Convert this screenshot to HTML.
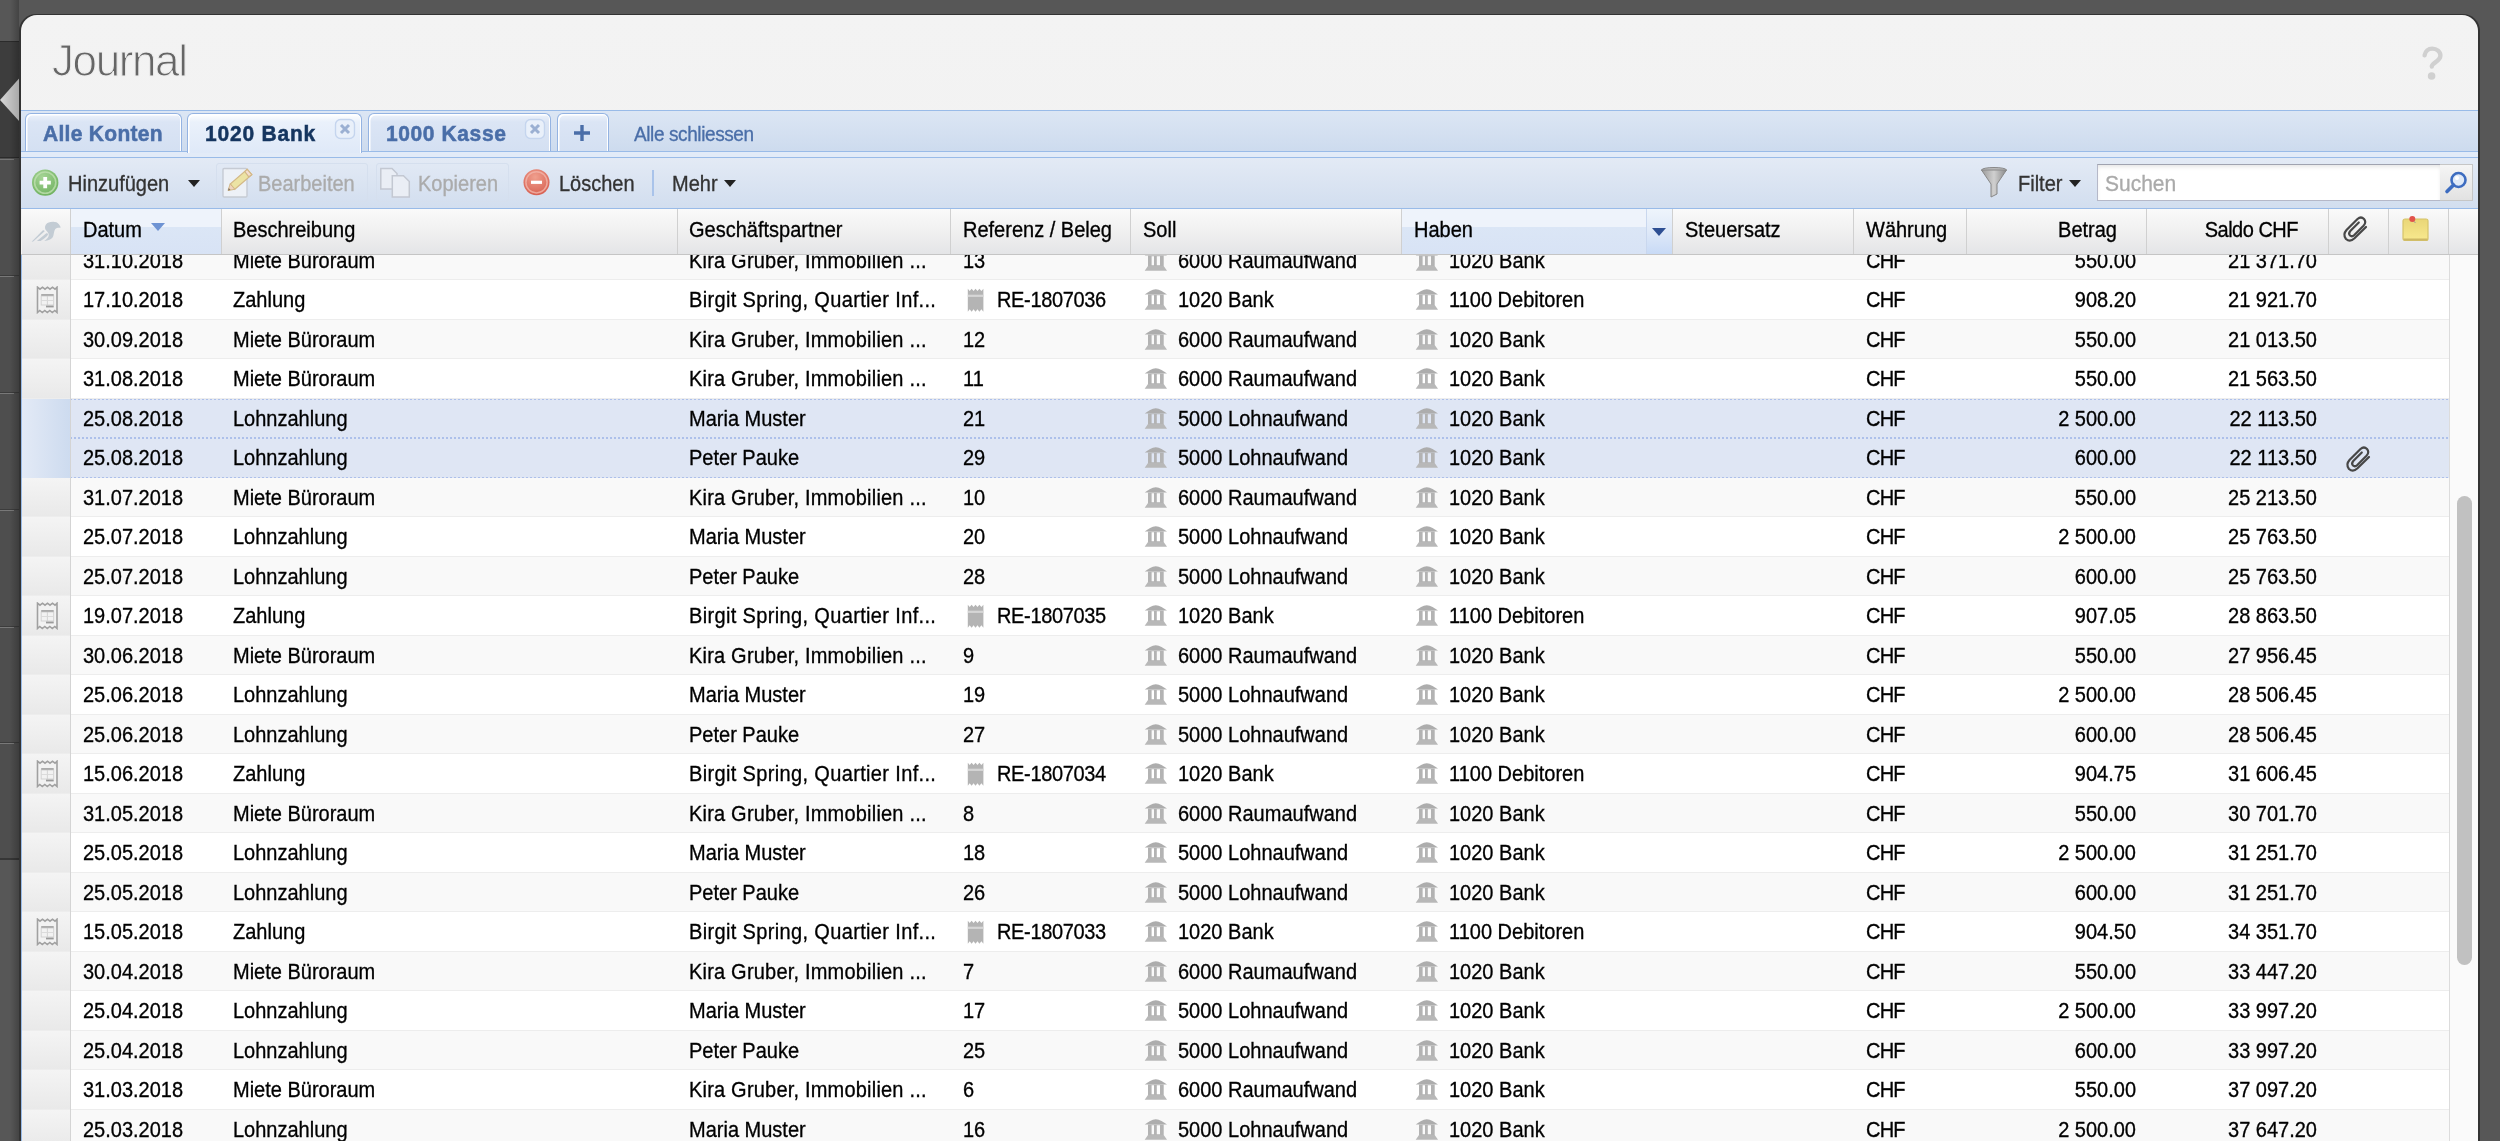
<!DOCTYPE html><html><head><meta charset="utf-8"><style>
*{margin:0;padding:0;box-sizing:border-box}
html,body{width:2500px;height:1141px;overflow:hidden;background:#575757;font-family:"Liberation Sans",sans-serif}
.a{position:absolute}
.t{position:absolute;white-space:nowrap;-webkit-text-stroke:0.3px currentColor}
</style></head><body>
<svg width="0" height="0" style="position:absolute"><defs><filter id="bl" x="-20%" y="-20%" width="140%" height="140%"><feGaussianBlur stdDeviation="0.45"/></filter></defs></svg>
<div class="a" style="left:0;top:0;width:21px;height:1141px;background:#4e4e4e"></div>
<div class="a" style="left:0;top:0;width:21px;height:41px;background:#575757"></div>
<div class="a" style="left:0;top:41px;width:20px;height:1px;background:#2b2b2b"></div>
<div class="a" style="left:0;top:42px;width:20px;height:115px;background:#3d3d3d"></div>
<div class="a" style="left:0;top:157px;width:20px;height:1px;background:#2b2b2b"></div>
<div class="a" style="left:0;top:159px;width:14px;height:1px;background:#767676"></div>
<div class="a" style="left:0;top:860px;width:21px;height:281px;background:#575757"></div>
<div class="a" style="left:0;top:858px;width:20px;height:2px;background:#363636"></div>
<div class="a" style="left:0;top:275px;width:20px;height:1px;background:#3c3c3c"></div>
<div class="a" style="left:0;top:276px;width:14px;height:1px;background:#787878"></div>
<div class="a" style="left:0;top:392px;width:20px;height:1px;background:#3c3c3c"></div>
<div class="a" style="left:0;top:393px;width:14px;height:1px;background:#787878"></div>
<div class="a" style="left:0;top:509px;width:20px;height:1px;background:#3c3c3c"></div>
<div class="a" style="left:0;top:510px;width:14px;height:1px;background:#787878"></div>
<div class="a" style="left:0;top:626px;width:20px;height:1px;background:#3c3c3c"></div>
<div class="a" style="left:0;top:627px;width:14px;height:1px;background:#787878"></div>
<div class="a" style="left:0;top:742px;width:20px;height:1px;background:#3c3c3c"></div>
<div class="a" style="left:0;top:743px;width:14px;height:1px;background:#787878"></div>
<div class="a" style="left:10px;top:0;width:9px;height:1141px;background:linear-gradient(90deg,rgba(0,0,0,0),rgba(0,0,0,0.22))"></div>
<svg class="a" style="left:0;top:76px" width="20" height="48" viewBox="0 0 20 48"><defs><linearGradient id="tg" x1="0" y1="0" x2="1" y2="0"><stop offset="0" stop-color="#d8d8d8"/><stop offset="1" stop-color="#a8a8a8"/></linearGradient></defs><path d="M19.5 2 L19.5 45.5 L0 24 Z" fill="url(#tg)"/></svg>
<div class="a" style="left:19px;top:14px;width:2461px;height:1200px;border-radius:17px 17px 0 0;background:#333"></div>
<div class="a" style="left:21px;top:15px;width:2457px;height:1200px;border-radius:16px 16px 0 0;background:linear-gradient(#f3f3f3,#ebebeb)"></div>
<div class="t" style="left:52px;top:38.95px;font-size:44px;line-height:44px;color:#666;font-weight:normal;transform:scaleY(1.01);transform-origin:0 37.25px;letter-spacing:-1.4px;-webkit-text-stroke:1.1px #efefef">Journal</div>
<svg class="a" style="left:2400px;top:30px" width="70" height="70" viewBox="0 0 70 70"><path d="M24.6 25.2 C25.2 21 28.5 18.6 32.2 18.6 C36.8 18.6 40.4 21.6 40.4 25.6 C40.4 29.2 37.6 30.8 35 32.6 C33 34 31.8 35.2 31.8 36.6" fill="none" stroke="#d0d0d0" stroke-width="4.4" stroke-linecap="round"/><circle cx="31.6" cy="46" r="3.8" fill="#d0d0d0"/></svg>
<div class="a" style="left:21px;top:110px;width:2457px;height:1px;background:#99bbe8"></div>
<div class="a" style="left:21px;top:111px;width:2457px;height:40px;background:linear-gradient(#dce6f4,#cddbee)"></div>
<div class="a" style="left:21px;top:151px;width:2457px;height:1px;background:#99bbe8"></div>
<div class="a" style="left:21px;top:152px;width:2457px;height:5px;background:#e2ebf8"></div>
<div class="a" style="left:21px;top:157px;width:2457px;height:1px;background:#99bbe8"></div>
<div class="a" style="left:25px;top:113px;width:157px;height:38px;border:1.6px solid #94b3e2;border-bottom:none;border-radius:6px 6px 0 0;background:linear-gradient(#eef3fb 0px,#dbe5f5 8px,#d4e0f2);box-shadow:inset 1.5px 1.5px 0 #fff,inset -1px 0 0 #fff"></div>
<div class="a" style="left:187px;top:113px;width:175px;height:40px;border:1.6px solid #94b3e2;border-bottom:none;border-radius:6px 6px 0 0;background:linear-gradient(#ffffff 0px,#eaf1fb 8px,#dfe9f8);box-shadow:inset 1.5px 1.5px 0 #fff,inset -1px 0 0 #fff"></div>
<div class="a" style="left:368px;top:113px;width:183px;height:38px;border:1.6px solid #94b3e2;border-bottom:none;border-radius:6px 6px 0 0;background:linear-gradient(#eef3fb 0px,#dbe5f5 8px,#d4e0f2);box-shadow:inset 1.5px 1.5px 0 #fff,inset -1px 0 0 #fff"></div>
<div class="a" style="left:557px;top:113px;width:52px;height:38px;border:1.6px solid #94b3e2;border-bottom:none;border-radius:6px 6px 0 0;background:linear-gradient(#eef3fb 0px,#dbe5f5 8px,#d4e0f2);box-shadow:inset 1.5px 1.5px 0 #fff,inset -1px 0 0 #fff"></div>
<div class="t" style="left:43px;top:123.22px;font-size:21px;line-height:21px;color:#4a6ea8;font-weight:bold;transform:scaleY(1.07);transform-origin:0 17.78px;letter-spacing:0.3px;-webkit-text-stroke:0.5px currentColor">Alle Konten</div>
<div class="t" style="left:205px;top:123.22px;font-size:21px;line-height:21px;color:#15355f;font-weight:bold;transform:scaleY(1.07);transform-origin:0 17.78px;letter-spacing:0.8px;-webkit-text-stroke:0.5px currentColor">1020 Bank</div>
<div class="t" style="left:386px;top:123.22px;font-size:21px;line-height:21px;color:#4a6ea8;font-weight:bold;transform:scaleY(1.07);transform-origin:0 17.78px;letter-spacing:0.6px;-webkit-text-stroke:0.5px currentColor">1000 Kasse</div>
<svg class="a" style="left:572px;top:123px" width="20" height="20" viewBox="0 0 20 20"><path d="M10 2 V18 M2 10 H18" stroke="#4a6ea8" stroke-width="3.4"/></svg>
<div class="t" style="left:634px;top:124.92px;font-size:19px;line-height:19px;color:#4a6ea8;font-weight:normal;transform:scaleY(1.07);transform-origin:0 16.08px;letter-spacing:-0.4px">Alle schliessen</div>
<svg class="a" style="left:334px;top:118px" width="22" height="22" viewBox="0 0 22 22"><g filter="url(#bl)"><rect x="1.5" y="1.5" width="19" height="19" rx="5" fill="#e9f0fa" stroke="#c5d5ee" stroke-width="1.4"/><path d="M7 7 L15 15 M15 7 L7 15" stroke="#9bb0d2" stroke-width="3"/></g></svg>
<svg class="a" style="left:524px;top:118px" width="22" height="22" viewBox="0 0 22 22"><g filter="url(#bl)"><rect x="1.5" y="1.5" width="19" height="19" rx="5" fill="#e9f0fa" stroke="#c5d5ee" stroke-width="1.4"/><path d="M7 7 L15 15 M15 7 L7 15" stroke="#9bb0d2" stroke-width="3"/></g></svg>
<div class="a" style="left:21px;top:158px;width:2457px;height:50px;background:linear-gradient(#e3eaf5,#d2deef)"></div>
<div class="a" style="left:21px;top:208px;width:2457px;height:1px;background:#99bbe8"></div>
<svg class="a" style="left:30px;top:168px" width="30" height="30" viewBox="0 0 30 30"><defs><radialGradient id="gg" cx="0.4" cy="0.3" r="0.8"><stop offset="0" stop-color="#a6d596"/><stop offset="1" stop-color="#6aae5a"/></radialGradient></defs><g filter="url(#bl)"><circle cx="15.2" cy="14.6" r="13.2" fill="url(#gg)"/><circle cx="15.2" cy="14.6" r="10.6" fill="none" stroke="#bfe0b0" stroke-width="1.6" opacity="0.8"/><path d="M15.2 9 V20.2 M9.6 14.6 H20.8" stroke="#fff" stroke-width="3.8"/></g></svg>
<div class="t" style="left:68px;top:174.07px;font-size:20px;line-height:20px;color:#333;font-weight:normal;transform:scaleY(1.07);transform-origin:0 16.93px;">Hinzufügen</div>
<svg class="a" style="left:188px;top:180px" width="12" height="7" viewBox="0 0 12 7"><path d="M0 0 H12 L6 7 Z" fill="#222"/></svg>
<div class="a" style="left:216px;top:163px;width:152px;height:39px;border:1px solid #d5dfee;border-radius:3px"></div>
<svg class="a" style="left:222px;top:167px" width="32" height="32" viewBox="0 0 32 32"><g filter="url(#bl)"><rect x="1" y="1.5" width="24" height="28.5" rx="1.2" fill="#edf1f7" stroke="#c6cbd4" stroke-width="1.4"/><path d="M12.8 22.3 L29.8 7.65 L25.2 2.35 L8.2 16.95 Z" fill="#ece3a4" stroke="#d3b887" stroke-width="1.2"/><path d="M26.8 9.8 L29.8 7.65 L25.2 2.35 L22.8 4.6 Z" fill="#f4ddd0" stroke="#d3b887" stroke-width="1.2"/><path d="M6 23.5 L12.8 22.3 L8.2 16.95 Z" fill="#f0d4be" stroke="#d3b887" stroke-width="1"/><path d="M6 23.5 L8.5 23 L6.8 21 Z" fill="#7d7060"/></g></svg>
<div class="t" style="left:258px;top:174.07px;font-size:20px;line-height:20px;color:#ababab;font-weight:normal;transform:scaleY(1.07);transform-origin:0 16.93px;">Bearbeiten</div>
<div class="a" style="left:376px;top:163px;width:133px;height:39px;border:1px solid #d5dfee;border-radius:3px"></div>
<svg class="a" style="left:379px;top:167px" width="32" height="32" viewBox="0 0 32 32"><g filter="url(#bl)" fill="#eaeef5" stroke="#c3c8d2" stroke-width="1.5"><path d="M1.8 1.5 H13 L18 6.5 V22 H1.8 Z"/><path d="M13.3 8.8 H24.5 L30.3 14.5 V29.9 H13.3 Z"/></g></svg>
<div class="t" style="left:418px;top:174.07px;font-size:20px;line-height:20px;color:#ababab;font-weight:normal;transform:scaleY(1.07);transform-origin:0 16.93px;">Kopieren</div>
<svg class="a" style="left:522px;top:168px" width="30" height="30" viewBox="0 0 30 30"><defs><radialGradient id="rg" cx="0.45" cy="0.3" r="0.8"><stop offset="0" stop-color="#f0a08e"/><stop offset="1" stop-color="#d4584a"/></radialGradient></defs><g filter="url(#bl)"><circle cx="14.5" cy="14.3" r="13" fill="url(#rg)"/><circle cx="14.5" cy="14.3" r="10.6" fill="none" stroke="#f2b5aa" stroke-width="1.5" opacity="0.8"/><path d="M9 14.3 H20" stroke="#fff" stroke-width="3.2"/></g></svg>
<div class="t" style="left:559px;top:174.07px;font-size:20px;line-height:20px;color:#333;font-weight:normal;transform:scaleY(1.07);transform-origin:0 16.93px;">Löschen</div>
<div class="a" style="left:652px;top:170px;width:2px;height:26px;background:#a9c3ea"></div>
<div class="t" style="left:672px;top:174.07px;font-size:20px;line-height:20px;color:#333;font-weight:normal;transform:scaleY(1.07);transform-origin:0 16.93px;">Mehr</div>
<svg class="a" style="left:724px;top:180px" width="12" height="7" viewBox="0 0 12 7"><path d="M0 0 H12 L6 7 Z" fill="#222"/></svg>
<svg class="a" style="left:1980px;top:167px" width="28" height="32" viewBox="0 0 28 32"><defs><linearGradient id="fg" x1="0" y1="0" x2="1" y2="0"><stop offset="0" stop-color="#9a9a9a"/><stop offset="0.5" stop-color="#d0d0d0"/><stop offset="1" stop-color="#8a8a8a"/></linearGradient></defs><ellipse cx="14" cy="3" rx="12.5" ry="2.5" fill="#bbb" stroke="#888"/><path d="M1.5 3 L11 17 V30 L17 27 V17 L26.5 3 Z" fill="url(#fg)" stroke="#888"/></svg>
<div class="t" style="left:2018px;top:174.07px;font-size:20px;line-height:20px;color:#333;font-weight:normal;transform:scaleY(1.07);transform-origin:0 16.93px;">Filter</div>
<svg class="a" style="left:2069px;top:180px" width="12" height="7" viewBox="0 0 12 7"><path d="M0 0 H12 L6 7 Z" fill="#222"/></svg>
<div class="a" style="left:2097px;top:164px;width:344px;height:37px;background:#fff;border:1px solid #b5b8c8;border-top-color:#a0a3b0;box-shadow:inset 0 3px 4px -1px rgba(0,0,0,0.10)"></div>
<div class="t" style="left:2105px;top:173.22px;font-size:21px;line-height:21px;color:#aaa;font-weight:normal;transform:scaleY(1.07);transform-origin:0 17.78px;">Suchen</div>
<div class="a" style="left:2440px;top:164px;width:33px;height:37px;background:linear-gradient(#f5f5f5,#e2e2e2);border:1px solid #c6c6c6;border-left:none"></div>
<svg class="a" style="left:2442px;top:167px" width="30" height="30" viewBox="0 0 30 30"><g filter="url(#bl)"><circle cx="16.5" cy="13" r="7" fill="#dfe9f7" stroke="#3d6cc0" stroke-width="2.6"/><circle cx="15" cy="11" r="2" fill="#fff"/><path d="M11.5 18 L5 24.5" stroke="#3d6cc0" stroke-width="3.6" stroke-linecap="round"/></g></svg>
<div class="a" style="left:22px;top:209px;width:2456px;height:45px;background:linear-gradient(#fafafa,#f0f0f0 50%,#e4e5e7)"></div>
<div class="a" style="left:71px;top:209px;width:150px;height:45px;background:linear-gradient(#eef3fb 0,#eef3fb 18px,#dbe6f6 18px,#d8e3f5)"></div>
<div class="a" style="left:1402px;top:209px;width:244px;height:45px;background:linear-gradient(#eef3fb 0,#eef3fb 18px,#dbe6f6 18px,#d8e3f5)"></div>
<div class="a" style="left:1646px;top:209px;width:1px;height:45px;background:#c9d7ee"></div>
<div class="a" style="left:1647px;top:209px;width:25px;height:45px;background:linear-gradient(#eef4fc,#dfe9f8 50%,#c8daf6)"></div>
<div class="a" style="left:21px;top:254px;width:2457px;height:1px;background:#c5c5c5"></div>
<div class="a" style="left:70px;top:209px;width:1px;height:45px;background:#d0d0d0"></div>
<div class="a" style="left:221px;top:209px;width:1px;height:45px;background:#d0d0d0"></div>
<div class="a" style="left:677px;top:209px;width:1px;height:45px;background:#d0d0d0"></div>
<div class="a" style="left:950px;top:209px;width:1px;height:45px;background:#d0d0d0"></div>
<div class="a" style="left:1130px;top:209px;width:1px;height:45px;background:#d0d0d0"></div>
<div class="a" style="left:1401px;top:209px;width:1px;height:45px;background:#d0d0d0"></div>
<div class="a" style="left:1672px;top:209px;width:1px;height:45px;background:#d0d0d0"></div>
<div class="a" style="left:1853px;top:209px;width:1px;height:45px;background:#d0d0d0"></div>
<div class="a" style="left:1966px;top:209px;width:1px;height:45px;background:#d0d0d0"></div>
<div class="a" style="left:2146px;top:209px;width:1px;height:45px;background:#d0d0d0"></div>
<div class="a" style="left:2328px;top:209px;width:1px;height:45px;background:#d0d0d0"></div>
<div class="a" style="left:2388px;top:209px;width:1px;height:45px;background:#d0d0d0"></div>
<div class="a" style="left:2448px;top:209px;width:1px;height:45px;background:#d0d0d0"></div>
<div class="t" style="left:83px;top:220.07px;font-size:20px;line-height:20px;color:#000;font-weight:normal;transform:scaleY(1.07);transform-origin:0 16.93px;">Datum</div>
<div class="t" style="left:233px;top:220.07px;font-size:20px;line-height:20px;color:#000;font-weight:normal;transform:scaleY(1.07);transform-origin:0 16.93px;">Beschreibung</div>
<div class="t" style="left:689px;top:220.07px;font-size:20px;line-height:20px;color:#000;font-weight:normal;transform:scaleY(1.07);transform-origin:0 16.93px;">Geschäftspartner</div>
<div class="t" style="left:963px;top:220.07px;font-size:20px;line-height:20px;color:#000;font-weight:normal;transform:scaleY(1.07);transform-origin:0 16.93px;">Referenz / Beleg</div>
<div class="t" style="left:1143px;top:220.07px;font-size:20px;line-height:20px;color:#000;font-weight:normal;transform:scaleY(1.07);transform-origin:0 16.93px;">Soll</div>
<div class="t" style="left:1414px;top:220.07px;font-size:20px;line-height:20px;color:#000;font-weight:normal;transform:scaleY(1.07);transform-origin:0 16.93px;">Haben</div>
<div class="t" style="left:1685px;top:220.07px;font-size:20px;line-height:20px;color:#000;font-weight:normal;transform:scaleY(1.07);transform-origin:0 16.93px;">Steuersatz</div>
<div class="t" style="left:1866px;top:220.07px;font-size:20px;line-height:20px;color:#000;font-weight:normal;transform:scaleY(1.07);transform-origin:0 16.93px;">Währung</div>
<div class="t" style="right:383px;top:220.07px;font-size:20px;line-height:20px;color:#000;font-weight:normal;transform:scaleY(1.07);transform-origin:0 16.93px;">Betrag</div>
<div class="t" style="right:202px;top:220.07px;font-size:20px;line-height:20px;color:#000;font-weight:normal;transform:scaleY(1.07);transform-origin:0 16.93px;letter-spacing:-0.5px">Saldo CHF</div>
<svg class="a" style="left:151px;top:223px" width="14" height="9" viewBox="0 0 14 9"><path d="M0 0 H14 L7 8 Z" fill="#6e93d3"/></svg>
<svg class="a" style="left:1652px;top:228px" width="14" height="8" viewBox="0 0 14 8"><path d="M0 0 H14 L7 8 Z" fill="#2e4f93"/></svg>
<svg class="a" style="left:26px;top:212px" width="40" height="40" viewBox="0 0 40 40"><g filter="url(#bl)" fill="#c3ccd4"><path d="M19.6 17.8 C18.3 15 19.5 12 22 10.8 C24.5 9.6 28 9.3 30.5 10.2 C32.5 11 34 13.5 34.8 15.6 C33 15.8 30.5 15.8 29.3 17 C28 18.5 28 21.5 27.3 24 C26.5 27 22.5 28.8 18.2 28.9 C20.5 27.5 22.8 25.5 22.8 23 C22.8 21 21 19.5 19.6 17.8 Z"/><path d="M5.6 29.8 L16.6 18.6 C17.3 18 18.3 18.4 18.7 19.2 L7.2 29.6 Z"/><path d="M10.9 28.9 L20.3 21.3 C21.2 20.8 22.2 21.5 22 22.6 C21.5 24.5 17 27.5 14.7 28.9 Z"/></g></svg>
<div class="a" style="left:2330px;top:210px"><svg width="40" height="40" viewBox="0 0 40 40"><path d="M28.8 12.5 L20.5 20.8 Q18 23.5 20 25.5 Q22 27.2 24.3 25 L33.5 15.8 Q36.8 12.3 34 9 Q31 6 27.5 9 L16.5 20 Q12.5 24.5 16 29 Q20 32.5 24.5 28.3 L36 17" fill="none" stroke="#474747" stroke-width="2.2" stroke-linecap="round"/></svg></div>
<svg class="a" style="left:2400px;top:214px" width="32" height="30" viewBox="0 0 32 30"><defs><linearGradient id="ng" x1="0" y1="0" x2="0" y2="1"><stop offset="0" stop-color="#e9d677"/><stop offset="1" stop-color="#f8e98e"/></linearGradient></defs><g filter="url(#bl)"><rect x="3" y="5" width="25" height="21.5" rx="2" fill="url(#ng)" stroke="#d6c46a" stroke-width="1.2"/><rect x="3.5" y="24.5" width="24" height="2" fill="#cdb865"/><path d="M12.5 6 L15.5 9" stroke="#999" stroke-width="1"/><circle cx="12.3" cy="5.1" r="3" fill="#e2534c"/></g></svg>
<div class="a" style="left:0;top:255px;width:2500px;height:886px;overflow:hidden">
<div class="a" style="left:21px;top:0;width:1px;height:900px;background:#99bbe8"></div>
<div class="a" style="left:2449px;top:0;width:29px;height:900px;background:#fafafa;border-left:1px solid #dcdcdc"></div>
<div class="a" style="left:2457px;top:241px;width:15px;height:469px;border-radius:8px;background:#c1c1c1"></div>
<div class="a" style="left:22px;top:-14px;width:2427px;height:39px;background:#f9f9f9"></div>
<div class="a" style="left:22px;top:24px;width:2427px;height:1px;background:#ededed"></div>
<div class="a" style="left:22px;top:-14px;width:48px;height:38px;background:linear-gradient(#f4f4f4,#e9e9e9)"></div>
<div class="a" style="left:70px;top:-14px;width:1px;height:39px;background:#d4d4d4"></div>
<div class="t" style="left:83px;top:-4.33px;font-size:20px;line-height:20px;color:#000;font-weight:normal;transform:scaleY(1.07);transform-origin:0 16.93px;">31.10.2018</div>
<div class="t" style="left:233px;top:-4.33px;font-size:20px;line-height:20px;color:#000;font-weight:normal;transform:scaleY(1.07);transform-origin:0 16.93px;">Miete Büroraum</div>
<div class="t" style="left:689px;top:-4.33px;font-size:20px;line-height:20px;color:#000;font-weight:normal;transform:scaleY(1.07);transform-origin:0 16.93px;letter-spacing:0.2px">Kira Gruber, Immobilien ...</div>
<div class="t" style="left:963px;top:-4.33px;font-size:20px;line-height:20px;color:#000;font-weight:normal;transform:scaleY(1.07);transform-origin:0 16.93px;">13</div>
<div class="a" style="left:1144px;top:-6px"><svg width="24" height="23" viewBox="0 0 24 23"><g filter="url(#bl)" fill="#b3b3b3"><path d="M0.7 6.5 C4 4 8 1.2 11.8 1.2 C15.6 1.2 19.6 4 23 6.5 Z" fill="#adadad"/><path d="M4 6.5 H19.7 V17 H4 Z M7.6 7.3 V16.3 H10 V7.3 Z M12.8 7.3 V16.3 H16 V7.3 Z" fill-rule="evenodd"/><path d="M4 17 L19.7 17 L23 21.8 L0.7 21.8 Z" fill="#b8b8b8"/></g></svg></div>
<div class="t" style="left:1178px;top:-4.33px;font-size:20px;line-height:20px;color:#000;font-weight:normal;transform:scaleY(1.07);transform-origin:0 16.93px;">6000 Raumaufwand</div>
<div class="a" style="left:1415px;top:-6px"><svg width="24" height="23" viewBox="0 0 24 23"><g filter="url(#bl)" fill="#b3b3b3"><path d="M0.7 6.5 C4 4 8 1.2 11.8 1.2 C15.6 1.2 19.6 4 23 6.5 Z" fill="#adadad"/><path d="M4 6.5 H19.7 V17 H4 Z M7.6 7.3 V16.3 H10 V7.3 Z M12.8 7.3 V16.3 H16 V7.3 Z" fill-rule="evenodd"/><path d="M4 17 L19.7 17 L23 21.8 L0.7 21.8 Z" fill="#b8b8b8"/></g></svg></div>
<div class="t" style="left:1449px;top:-4.33px;font-size:20px;line-height:20px;color:#000;font-weight:normal;transform:scaleY(1.07);transform-origin:0 16.93px;">1020 Bank</div>
<div class="t" style="left:1866px;top:-4.33px;font-size:20px;line-height:20px;color:#000;font-weight:normal;transform:scaleY(1.07);transform-origin:0 16.93px;letter-spacing:-0.8px">CHF</div>
<div class="t" style="right:364px;top:-4.33px;font-size:20px;line-height:20px;color:#000;font-weight:normal;transform:scaleY(1.07);transform-origin:0 16.93px;">550.00</div>
<div class="t" style="right:183px;top:-4.33px;font-size:20px;line-height:20px;color:#000;font-weight:normal;transform:scaleY(1.07);transform-origin:0 16.93px;">21 371.70</div>
<div class="a" style="left:22px;top:25px;width:2427px;height:40px;background:#ffffff"></div>
<div class="a" style="left:22px;top:64px;width:2427px;height:1px;background:#ededed"></div>
<div class="a" style="left:22px;top:25px;width:48px;height:39px;background:linear-gradient(#f4f4f4,#e9e9e9)"></div>
<div class="a" style="left:70px;top:25px;width:1px;height:40px;background:#d4d4d4"></div>
<div class="t" style="left:83px;top:35.17px;font-size:20px;line-height:20px;color:#000;font-weight:normal;transform:scaleY(1.07);transform-origin:0 16.93px;">17.10.2018</div>
<div class="t" style="left:233px;top:35.17px;font-size:20px;line-height:20px;color:#000;font-weight:normal;transform:scaleY(1.07);transform-origin:0 16.93px;">Zahlung</div>
<div class="t" style="left:689px;top:35.17px;font-size:20px;line-height:20px;color:#000;font-weight:normal;transform:scaleY(1.07);transform-origin:0 16.93px;letter-spacing:0.35px">Birgit Spring, Quartier Inf...</div>
<div class="a" style="left:967px;top:33px"><svg width="19" height="25" viewBox="0 0 19 25"><g filter="url(#bl)"><path d="M0.8 0.8 L2.7 3 L4.6 0.8 L6.6 3 L8.5 0.8 L10.5 3 L12.4 0.8 L14.4 3 L16.4 0.8 L16.4 23.8 L14.4 21.3 L12.4 23.8 L10.5 21.3 L8.5 23.8 L6.6 21.3 L4.6 23.8 L2.7 21.3 L0.8 23.8 Z" fill="#b4b4b4"/><rect x="0.8" y="6.7" width="15.6" height="2.2" fill="#d6d6d6"/></g></svg></div>
<div class="t" style="left:997px;top:35.17px;font-size:20px;line-height:20px;color:#000;font-weight:normal;transform:scaleY(1.07);transform-origin:0 16.93px;letter-spacing:-0.35px">RE-1807036</div>
<div class="a" style="left:36px;top:31px"><svg width="23" height="28" viewBox="0 0 23 28"><g filter="url(#bl)"><path d="M1.5 1.2 L4 3.2 L6.5 1.2 L9 3.2 L11.5 1.2 L14 3.2 L16.5 1.2 L19 3.2 L21 1.2 L21 26.5 L18.8 24.5 L16.3 26.5 L13.8 24.5 L11.3 26.5 L8.8 24.5 L6.3 26.5 L3.8 24.5 L1.5 26.5 Z" fill="#f2f2f2" stroke="#a0a0a0" stroke-width="1.6"/><rect x="5.2" y="8.2" width="12.5" height="1.8" fill="#9a9a9a"/><rect x="5.2" y="10" width="12.5" height="9" fill="none" stroke="#cfcfcf" stroke-width="0.9"/><line x1="11.4" y1="10" x2="11.4" y2="19" stroke="#cfcfcf" stroke-width="0.9"/><line x1="5.2" y1="14.5" x2="17.7" y2="14.5" stroke="#d8d8d8" stroke-width="0.9"/><rect x="10" y="19.6" width="7.7" height="1.8" fill="#9a9a9a"/></g></svg></div>
<div class="a" style="left:1144px;top:33px"><svg width="24" height="23" viewBox="0 0 24 23"><g filter="url(#bl)" fill="#b3b3b3"><path d="M0.7 6.5 C4 4 8 1.2 11.8 1.2 C15.6 1.2 19.6 4 23 6.5 Z" fill="#adadad"/><path d="M4 6.5 H19.7 V17 H4 Z M7.6 7.3 V16.3 H10 V7.3 Z M12.8 7.3 V16.3 H16 V7.3 Z" fill-rule="evenodd"/><path d="M4 17 L19.7 17 L23 21.8 L0.7 21.8 Z" fill="#b8b8b8"/></g></svg></div>
<div class="t" style="left:1178px;top:35.17px;font-size:20px;line-height:20px;color:#000;font-weight:normal;transform:scaleY(1.07);transform-origin:0 16.93px;">1020 Bank</div>
<div class="a" style="left:1415px;top:33px"><svg width="24" height="23" viewBox="0 0 24 23"><g filter="url(#bl)" fill="#b3b3b3"><path d="M0.7 6.5 C4 4 8 1.2 11.8 1.2 C15.6 1.2 19.6 4 23 6.5 Z" fill="#adadad"/><path d="M4 6.5 H19.7 V17 H4 Z M7.6 7.3 V16.3 H10 V7.3 Z M12.8 7.3 V16.3 H16 V7.3 Z" fill-rule="evenodd"/><path d="M4 17 L19.7 17 L23 21.8 L0.7 21.8 Z" fill="#b8b8b8"/></g></svg></div>
<div class="t" style="left:1449px;top:35.17px;font-size:20px;line-height:20px;color:#000;font-weight:normal;transform:scaleY(1.07);transform-origin:0 16.93px;">1100 Debitoren</div>
<div class="t" style="left:1866px;top:35.17px;font-size:20px;line-height:20px;color:#000;font-weight:normal;transform:scaleY(1.07);transform-origin:0 16.93px;letter-spacing:-0.8px">CHF</div>
<div class="t" style="right:364px;top:35.17px;font-size:20px;line-height:20px;color:#000;font-weight:normal;transform:scaleY(1.07);transform-origin:0 16.93px;">908.20</div>
<div class="t" style="right:183px;top:35.17px;font-size:20px;line-height:20px;color:#000;font-weight:normal;transform:scaleY(1.07);transform-origin:0 16.93px;">21 921.70</div>
<div class="a" style="left:22px;top:65px;width:2427px;height:39px;background:#f9f9f9"></div>
<div class="a" style="left:22px;top:103px;width:2427px;height:1px;background:#ededed"></div>
<div class="a" style="left:22px;top:65px;width:48px;height:38px;background:linear-gradient(#f4f4f4,#e9e9e9)"></div>
<div class="a" style="left:70px;top:65px;width:1px;height:39px;background:#d4d4d4"></div>
<div class="t" style="left:83px;top:74.67px;font-size:20px;line-height:20px;color:#000;font-weight:normal;transform:scaleY(1.07);transform-origin:0 16.93px;">30.09.2018</div>
<div class="t" style="left:233px;top:74.67px;font-size:20px;line-height:20px;color:#000;font-weight:normal;transform:scaleY(1.07);transform-origin:0 16.93px;">Miete Büroraum</div>
<div class="t" style="left:689px;top:74.67px;font-size:20px;line-height:20px;color:#000;font-weight:normal;transform:scaleY(1.07);transform-origin:0 16.93px;letter-spacing:0.2px">Kira Gruber, Immobilien ...</div>
<div class="t" style="left:963px;top:74.67px;font-size:20px;line-height:20px;color:#000;font-weight:normal;transform:scaleY(1.07);transform-origin:0 16.93px;">12</div>
<div class="a" style="left:1144px;top:73px"><svg width="24" height="23" viewBox="0 0 24 23"><g filter="url(#bl)" fill="#b3b3b3"><path d="M0.7 6.5 C4 4 8 1.2 11.8 1.2 C15.6 1.2 19.6 4 23 6.5 Z" fill="#adadad"/><path d="M4 6.5 H19.7 V17 H4 Z M7.6 7.3 V16.3 H10 V7.3 Z M12.8 7.3 V16.3 H16 V7.3 Z" fill-rule="evenodd"/><path d="M4 17 L19.7 17 L23 21.8 L0.7 21.8 Z" fill="#b8b8b8"/></g></svg></div>
<div class="t" style="left:1178px;top:74.67px;font-size:20px;line-height:20px;color:#000;font-weight:normal;transform:scaleY(1.07);transform-origin:0 16.93px;">6000 Raumaufwand</div>
<div class="a" style="left:1415px;top:73px"><svg width="24" height="23" viewBox="0 0 24 23"><g filter="url(#bl)" fill="#b3b3b3"><path d="M0.7 6.5 C4 4 8 1.2 11.8 1.2 C15.6 1.2 19.6 4 23 6.5 Z" fill="#adadad"/><path d="M4 6.5 H19.7 V17 H4 Z M7.6 7.3 V16.3 H10 V7.3 Z M12.8 7.3 V16.3 H16 V7.3 Z" fill-rule="evenodd"/><path d="M4 17 L19.7 17 L23 21.8 L0.7 21.8 Z" fill="#b8b8b8"/></g></svg></div>
<div class="t" style="left:1449px;top:74.67px;font-size:20px;line-height:20px;color:#000;font-weight:normal;transform:scaleY(1.07);transform-origin:0 16.93px;">1020 Bank</div>
<div class="t" style="left:1866px;top:74.67px;font-size:20px;line-height:20px;color:#000;font-weight:normal;transform:scaleY(1.07);transform-origin:0 16.93px;letter-spacing:-0.8px">CHF</div>
<div class="t" style="right:364px;top:74.67px;font-size:20px;line-height:20px;color:#000;font-weight:normal;transform:scaleY(1.07);transform-origin:0 16.93px;">550.00</div>
<div class="t" style="right:183px;top:74.67px;font-size:20px;line-height:20px;color:#000;font-weight:normal;transform:scaleY(1.07);transform-origin:0 16.93px;">21 013.50</div>
<div class="a" style="left:22px;top:104px;width:2427px;height:40px;background:#ffffff"></div>
<div class="a" style="left:22px;top:143px;width:2427px;height:1px;background:#ededed"></div>
<div class="a" style="left:22px;top:104px;width:48px;height:39px;background:linear-gradient(#f4f4f4,#e9e9e9)"></div>
<div class="a" style="left:70px;top:104px;width:1px;height:40px;background:#d4d4d4"></div>
<div class="t" style="left:83px;top:114.17px;font-size:20px;line-height:20px;color:#000;font-weight:normal;transform:scaleY(1.07);transform-origin:0 16.93px;">31.08.2018</div>
<div class="t" style="left:233px;top:114.17px;font-size:20px;line-height:20px;color:#000;font-weight:normal;transform:scaleY(1.07);transform-origin:0 16.93px;">Miete Büroraum</div>
<div class="t" style="left:689px;top:114.17px;font-size:20px;line-height:20px;color:#000;font-weight:normal;transform:scaleY(1.07);transform-origin:0 16.93px;letter-spacing:0.2px">Kira Gruber, Immobilien ...</div>
<div class="t" style="left:963px;top:114.17px;font-size:20px;line-height:20px;color:#000;font-weight:normal;transform:scaleY(1.07);transform-origin:0 16.93px;">11</div>
<div class="a" style="left:1144px;top:112px"><svg width="24" height="23" viewBox="0 0 24 23"><g filter="url(#bl)" fill="#b3b3b3"><path d="M0.7 6.5 C4 4 8 1.2 11.8 1.2 C15.6 1.2 19.6 4 23 6.5 Z" fill="#adadad"/><path d="M4 6.5 H19.7 V17 H4 Z M7.6 7.3 V16.3 H10 V7.3 Z M12.8 7.3 V16.3 H16 V7.3 Z" fill-rule="evenodd"/><path d="M4 17 L19.7 17 L23 21.8 L0.7 21.8 Z" fill="#b8b8b8"/></g></svg></div>
<div class="t" style="left:1178px;top:114.17px;font-size:20px;line-height:20px;color:#000;font-weight:normal;transform:scaleY(1.07);transform-origin:0 16.93px;">6000 Raumaufwand</div>
<div class="a" style="left:1415px;top:112px"><svg width="24" height="23" viewBox="0 0 24 23"><g filter="url(#bl)" fill="#b3b3b3"><path d="M0.7 6.5 C4 4 8 1.2 11.8 1.2 C15.6 1.2 19.6 4 23 6.5 Z" fill="#adadad"/><path d="M4 6.5 H19.7 V17 H4 Z M7.6 7.3 V16.3 H10 V7.3 Z M12.8 7.3 V16.3 H16 V7.3 Z" fill-rule="evenodd"/><path d="M4 17 L19.7 17 L23 21.8 L0.7 21.8 Z" fill="#b8b8b8"/></g></svg></div>
<div class="t" style="left:1449px;top:114.17px;font-size:20px;line-height:20px;color:#000;font-weight:normal;transform:scaleY(1.07);transform-origin:0 16.93px;">1020 Bank</div>
<div class="t" style="left:1866px;top:114.17px;font-size:20px;line-height:20px;color:#000;font-weight:normal;transform:scaleY(1.07);transform-origin:0 16.93px;letter-spacing:-0.8px">CHF</div>
<div class="t" style="right:364px;top:114.17px;font-size:20px;line-height:20px;color:#000;font-weight:normal;transform:scaleY(1.07);transform-origin:0 16.93px;">550.00</div>
<div class="t" style="right:183px;top:114.17px;font-size:20px;line-height:20px;color:#000;font-weight:normal;transform:scaleY(1.07);transform-origin:0 16.93px;">21 563.50</div>
<div class="a" style="left:22px;top:144px;width:2427px;height:39px;background:#dfe6f4"></div>
<div class="a" style="left:22px;top:144px;width:2427px;height:1px;background:repeating-linear-gradient(90deg,#adc0ea 0 2px,transparent 2px 4px)"></div>
<div class="a" style="left:22px;top:182px;width:2427px;height:1px;background:repeating-linear-gradient(90deg,#adc0ea 0 2px,transparent 2px 4px)"></div>
<div class="a" style="left:22px;top:144px;width:48px;height:39px;background:linear-gradient(90deg,#e3eaf6,#cddbef)"></div>
<div class="a" style="left:70px;top:144px;width:1px;height:39px;background:#d4d4d4"></div>
<div class="t" style="left:83px;top:153.67px;font-size:20px;line-height:20px;color:#000;font-weight:normal;transform:scaleY(1.07);transform-origin:0 16.93px;">25.08.2018</div>
<div class="t" style="left:233px;top:153.67px;font-size:20px;line-height:20px;color:#000;font-weight:normal;transform:scaleY(1.07);transform-origin:0 16.93px;">Lohnzahlung</div>
<div class="t" style="left:689px;top:153.67px;font-size:20px;line-height:20px;color:#000;font-weight:normal;transform:scaleY(1.07);transform-origin:0 16.93px;">Maria Muster</div>
<div class="t" style="left:963px;top:153.67px;font-size:20px;line-height:20px;color:#000;font-weight:normal;transform:scaleY(1.07);transform-origin:0 16.93px;">21</div>
<div class="a" style="left:1144px;top:152px"><svg width="24" height="23" viewBox="0 0 24 23"><g filter="url(#bl)" fill="#b3b3b3"><path d="M0.7 6.5 C4 4 8 1.2 11.8 1.2 C15.6 1.2 19.6 4 23 6.5 Z" fill="#adadad"/><path d="M4 6.5 H19.7 V17 H4 Z M7.6 7.3 V16.3 H10 V7.3 Z M12.8 7.3 V16.3 H16 V7.3 Z" fill-rule="evenodd"/><path d="M4 17 L19.7 17 L23 21.8 L0.7 21.8 Z" fill="#b8b8b8"/></g></svg></div>
<div class="t" style="left:1178px;top:153.67px;font-size:20px;line-height:20px;color:#000;font-weight:normal;transform:scaleY(1.07);transform-origin:0 16.93px;">5000 Lohnaufwand</div>
<div class="a" style="left:1415px;top:152px"><svg width="24" height="23" viewBox="0 0 24 23"><g filter="url(#bl)" fill="#b3b3b3"><path d="M0.7 6.5 C4 4 8 1.2 11.8 1.2 C15.6 1.2 19.6 4 23 6.5 Z" fill="#adadad"/><path d="M4 6.5 H19.7 V17 H4 Z M7.6 7.3 V16.3 H10 V7.3 Z M12.8 7.3 V16.3 H16 V7.3 Z" fill-rule="evenodd"/><path d="M4 17 L19.7 17 L23 21.8 L0.7 21.8 Z" fill="#b8b8b8"/></g></svg></div>
<div class="t" style="left:1449px;top:153.67px;font-size:20px;line-height:20px;color:#000;font-weight:normal;transform:scaleY(1.07);transform-origin:0 16.93px;">1020 Bank</div>
<div class="t" style="left:1866px;top:153.67px;font-size:20px;line-height:20px;color:#000;font-weight:normal;transform:scaleY(1.07);transform-origin:0 16.93px;letter-spacing:-0.8px">CHF</div>
<div class="t" style="right:364px;top:153.67px;font-size:20px;line-height:20px;color:#000;font-weight:normal;transform:scaleY(1.07);transform-origin:0 16.93px;">2 500.00</div>
<div class="t" style="right:183px;top:153.67px;font-size:20px;line-height:20px;color:#000;font-weight:normal;transform:scaleY(1.07);transform-origin:0 16.93px;">22 113.50</div>
<div class="a" style="left:22px;top:183px;width:2427px;height:40px;background:#dfe6f4"></div>
<div class="a" style="left:22px;top:183px;width:2427px;height:1px;background:repeating-linear-gradient(90deg,#adc0ea 0 2px,transparent 2px 4px)"></div>
<div class="a" style="left:22px;top:222px;width:2427px;height:1px;background:repeating-linear-gradient(90deg,#adc0ea 0 2px,transparent 2px 4px)"></div>
<div class="a" style="left:22px;top:183px;width:48px;height:40px;background:linear-gradient(90deg,#e3eaf6,#cddbef)"></div>
<div class="a" style="left:70px;top:183px;width:1px;height:40px;background:#d4d4d4"></div>
<div class="t" style="left:83px;top:193.17px;font-size:20px;line-height:20px;color:#000;font-weight:normal;transform:scaleY(1.07);transform-origin:0 16.93px;">25.08.2018</div>
<div class="t" style="left:233px;top:193.17px;font-size:20px;line-height:20px;color:#000;font-weight:normal;transform:scaleY(1.07);transform-origin:0 16.93px;">Lohnzahlung</div>
<div class="t" style="left:689px;top:193.17px;font-size:20px;line-height:20px;color:#000;font-weight:normal;transform:scaleY(1.07);transform-origin:0 16.93px;">Peter Pauke</div>
<div class="t" style="left:963px;top:193.17px;font-size:20px;line-height:20px;color:#000;font-weight:normal;transform:scaleY(1.07);transform-origin:0 16.93px;">29</div>
<div class="a" style="left:1144px;top:191px"><svg width="24" height="23" viewBox="0 0 24 23"><g filter="url(#bl)" fill="#b3b3b3"><path d="M0.7 6.5 C4 4 8 1.2 11.8 1.2 C15.6 1.2 19.6 4 23 6.5 Z" fill="#adadad"/><path d="M4 6.5 H19.7 V17 H4 Z M7.6 7.3 V16.3 H10 V7.3 Z M12.8 7.3 V16.3 H16 V7.3 Z" fill-rule="evenodd"/><path d="M4 17 L19.7 17 L23 21.8 L0.7 21.8 Z" fill="#b8b8b8"/></g></svg></div>
<div class="t" style="left:1178px;top:193.17px;font-size:20px;line-height:20px;color:#000;font-weight:normal;transform:scaleY(1.07);transform-origin:0 16.93px;">5000 Lohnaufwand</div>
<div class="a" style="left:1415px;top:191px"><svg width="24" height="23" viewBox="0 0 24 23"><g filter="url(#bl)" fill="#b3b3b3"><path d="M0.7 6.5 C4 4 8 1.2 11.8 1.2 C15.6 1.2 19.6 4 23 6.5 Z" fill="#adadad"/><path d="M4 6.5 H19.7 V17 H4 Z M7.6 7.3 V16.3 H10 V7.3 Z M12.8 7.3 V16.3 H16 V7.3 Z" fill-rule="evenodd"/><path d="M4 17 L19.7 17 L23 21.8 L0.7 21.8 Z" fill="#b8b8b8"/></g></svg></div>
<div class="t" style="left:1449px;top:193.17px;font-size:20px;line-height:20px;color:#000;font-weight:normal;transform:scaleY(1.07);transform-origin:0 16.93px;">1020 Bank</div>
<div class="t" style="left:1866px;top:193.17px;font-size:20px;line-height:20px;color:#000;font-weight:normal;transform:scaleY(1.07);transform-origin:0 16.93px;letter-spacing:-0.8px">CHF</div>
<div class="t" style="right:364px;top:193.17px;font-size:20px;line-height:20px;color:#000;font-weight:normal;transform:scaleY(1.07);transform-origin:0 16.93px;">600.00</div>
<div class="t" style="right:183px;top:193.17px;font-size:20px;line-height:20px;color:#000;font-weight:normal;transform:scaleY(1.07);transform-origin:0 16.93px;">22 113.50</div>
<div class="a" style="left:2333px;top:185px"><svg width="40" height="40" viewBox="0 0 40 40"><path d="M28.8 12.5 L20.5 20.8 Q18 23.5 20 25.5 Q22 27.2 24.3 25 L33.5 15.8 Q36.8 12.3 34 9 Q31 6 27.5 9 L16.5 20 Q12.5 24.5 16 29 Q20 32.5 24.5 28.3 L36 17" fill="none" stroke="#474747" stroke-width="2.2" stroke-linecap="round"/></svg></div>
<div class="a" style="left:22px;top:223px;width:2427px;height:39px;background:#f9f9f9"></div>
<div class="a" style="left:22px;top:261px;width:2427px;height:1px;background:#ededed"></div>
<div class="a" style="left:22px;top:223px;width:48px;height:38px;background:linear-gradient(#f4f4f4,#e9e9e9)"></div>
<div class="a" style="left:70px;top:223px;width:1px;height:39px;background:#d4d4d4"></div>
<div class="t" style="left:83px;top:232.67px;font-size:20px;line-height:20px;color:#000;font-weight:normal;transform:scaleY(1.07);transform-origin:0 16.93px;">31.07.2018</div>
<div class="t" style="left:233px;top:232.67px;font-size:20px;line-height:20px;color:#000;font-weight:normal;transform:scaleY(1.07);transform-origin:0 16.93px;">Miete Büroraum</div>
<div class="t" style="left:689px;top:232.67px;font-size:20px;line-height:20px;color:#000;font-weight:normal;transform:scaleY(1.07);transform-origin:0 16.93px;letter-spacing:0.2px">Kira Gruber, Immobilien ...</div>
<div class="t" style="left:963px;top:232.67px;font-size:20px;line-height:20px;color:#000;font-weight:normal;transform:scaleY(1.07);transform-origin:0 16.93px;">10</div>
<div class="a" style="left:1144px;top:231px"><svg width="24" height="23" viewBox="0 0 24 23"><g filter="url(#bl)" fill="#b3b3b3"><path d="M0.7 6.5 C4 4 8 1.2 11.8 1.2 C15.6 1.2 19.6 4 23 6.5 Z" fill="#adadad"/><path d="M4 6.5 H19.7 V17 H4 Z M7.6 7.3 V16.3 H10 V7.3 Z M12.8 7.3 V16.3 H16 V7.3 Z" fill-rule="evenodd"/><path d="M4 17 L19.7 17 L23 21.8 L0.7 21.8 Z" fill="#b8b8b8"/></g></svg></div>
<div class="t" style="left:1178px;top:232.67px;font-size:20px;line-height:20px;color:#000;font-weight:normal;transform:scaleY(1.07);transform-origin:0 16.93px;">6000 Raumaufwand</div>
<div class="a" style="left:1415px;top:231px"><svg width="24" height="23" viewBox="0 0 24 23"><g filter="url(#bl)" fill="#b3b3b3"><path d="M0.7 6.5 C4 4 8 1.2 11.8 1.2 C15.6 1.2 19.6 4 23 6.5 Z" fill="#adadad"/><path d="M4 6.5 H19.7 V17 H4 Z M7.6 7.3 V16.3 H10 V7.3 Z M12.8 7.3 V16.3 H16 V7.3 Z" fill-rule="evenodd"/><path d="M4 17 L19.7 17 L23 21.8 L0.7 21.8 Z" fill="#b8b8b8"/></g></svg></div>
<div class="t" style="left:1449px;top:232.67px;font-size:20px;line-height:20px;color:#000;font-weight:normal;transform:scaleY(1.07);transform-origin:0 16.93px;">1020 Bank</div>
<div class="t" style="left:1866px;top:232.67px;font-size:20px;line-height:20px;color:#000;font-weight:normal;transform:scaleY(1.07);transform-origin:0 16.93px;letter-spacing:-0.8px">CHF</div>
<div class="t" style="right:364px;top:232.67px;font-size:20px;line-height:20px;color:#000;font-weight:normal;transform:scaleY(1.07);transform-origin:0 16.93px;">550.00</div>
<div class="t" style="right:183px;top:232.67px;font-size:20px;line-height:20px;color:#000;font-weight:normal;transform:scaleY(1.07);transform-origin:0 16.93px;">25 213.50</div>
<div class="a" style="left:22px;top:262px;width:2427px;height:40px;background:#ffffff"></div>
<div class="a" style="left:22px;top:301px;width:2427px;height:1px;background:#ededed"></div>
<div class="a" style="left:22px;top:262px;width:48px;height:39px;background:linear-gradient(#f4f4f4,#e9e9e9)"></div>
<div class="a" style="left:70px;top:262px;width:1px;height:40px;background:#d4d4d4"></div>
<div class="t" style="left:83px;top:272.17px;font-size:20px;line-height:20px;color:#000;font-weight:normal;transform:scaleY(1.07);transform-origin:0 16.93px;">25.07.2018</div>
<div class="t" style="left:233px;top:272.17px;font-size:20px;line-height:20px;color:#000;font-weight:normal;transform:scaleY(1.07);transform-origin:0 16.93px;">Lohnzahlung</div>
<div class="t" style="left:689px;top:272.17px;font-size:20px;line-height:20px;color:#000;font-weight:normal;transform:scaleY(1.07);transform-origin:0 16.93px;">Maria Muster</div>
<div class="t" style="left:963px;top:272.17px;font-size:20px;line-height:20px;color:#000;font-weight:normal;transform:scaleY(1.07);transform-origin:0 16.93px;">20</div>
<div class="a" style="left:1144px;top:270px"><svg width="24" height="23" viewBox="0 0 24 23"><g filter="url(#bl)" fill="#b3b3b3"><path d="M0.7 6.5 C4 4 8 1.2 11.8 1.2 C15.6 1.2 19.6 4 23 6.5 Z" fill="#adadad"/><path d="M4 6.5 H19.7 V17 H4 Z M7.6 7.3 V16.3 H10 V7.3 Z M12.8 7.3 V16.3 H16 V7.3 Z" fill-rule="evenodd"/><path d="M4 17 L19.7 17 L23 21.8 L0.7 21.8 Z" fill="#b8b8b8"/></g></svg></div>
<div class="t" style="left:1178px;top:272.17px;font-size:20px;line-height:20px;color:#000;font-weight:normal;transform:scaleY(1.07);transform-origin:0 16.93px;">5000 Lohnaufwand</div>
<div class="a" style="left:1415px;top:270px"><svg width="24" height="23" viewBox="0 0 24 23"><g filter="url(#bl)" fill="#b3b3b3"><path d="M0.7 6.5 C4 4 8 1.2 11.8 1.2 C15.6 1.2 19.6 4 23 6.5 Z" fill="#adadad"/><path d="M4 6.5 H19.7 V17 H4 Z M7.6 7.3 V16.3 H10 V7.3 Z M12.8 7.3 V16.3 H16 V7.3 Z" fill-rule="evenodd"/><path d="M4 17 L19.7 17 L23 21.8 L0.7 21.8 Z" fill="#b8b8b8"/></g></svg></div>
<div class="t" style="left:1449px;top:272.17px;font-size:20px;line-height:20px;color:#000;font-weight:normal;transform:scaleY(1.07);transform-origin:0 16.93px;">1020 Bank</div>
<div class="t" style="left:1866px;top:272.17px;font-size:20px;line-height:20px;color:#000;font-weight:normal;transform:scaleY(1.07);transform-origin:0 16.93px;letter-spacing:-0.8px">CHF</div>
<div class="t" style="right:364px;top:272.17px;font-size:20px;line-height:20px;color:#000;font-weight:normal;transform:scaleY(1.07);transform-origin:0 16.93px;">2 500.00</div>
<div class="t" style="right:183px;top:272.17px;font-size:20px;line-height:20px;color:#000;font-weight:normal;transform:scaleY(1.07);transform-origin:0 16.93px;">25 763.50</div>
<div class="a" style="left:22px;top:302px;width:2427px;height:39px;background:#f9f9f9"></div>
<div class="a" style="left:22px;top:340px;width:2427px;height:1px;background:#ededed"></div>
<div class="a" style="left:22px;top:302px;width:48px;height:38px;background:linear-gradient(#f4f4f4,#e9e9e9)"></div>
<div class="a" style="left:70px;top:302px;width:1px;height:39px;background:#d4d4d4"></div>
<div class="t" style="left:83px;top:311.67px;font-size:20px;line-height:20px;color:#000;font-weight:normal;transform:scaleY(1.07);transform-origin:0 16.93px;">25.07.2018</div>
<div class="t" style="left:233px;top:311.67px;font-size:20px;line-height:20px;color:#000;font-weight:normal;transform:scaleY(1.07);transform-origin:0 16.93px;">Lohnzahlung</div>
<div class="t" style="left:689px;top:311.67px;font-size:20px;line-height:20px;color:#000;font-weight:normal;transform:scaleY(1.07);transform-origin:0 16.93px;">Peter Pauke</div>
<div class="t" style="left:963px;top:311.67px;font-size:20px;line-height:20px;color:#000;font-weight:normal;transform:scaleY(1.07);transform-origin:0 16.93px;">28</div>
<div class="a" style="left:1144px;top:310px"><svg width="24" height="23" viewBox="0 0 24 23"><g filter="url(#bl)" fill="#b3b3b3"><path d="M0.7 6.5 C4 4 8 1.2 11.8 1.2 C15.6 1.2 19.6 4 23 6.5 Z" fill="#adadad"/><path d="M4 6.5 H19.7 V17 H4 Z M7.6 7.3 V16.3 H10 V7.3 Z M12.8 7.3 V16.3 H16 V7.3 Z" fill-rule="evenodd"/><path d="M4 17 L19.7 17 L23 21.8 L0.7 21.8 Z" fill="#b8b8b8"/></g></svg></div>
<div class="t" style="left:1178px;top:311.67px;font-size:20px;line-height:20px;color:#000;font-weight:normal;transform:scaleY(1.07);transform-origin:0 16.93px;">5000 Lohnaufwand</div>
<div class="a" style="left:1415px;top:310px"><svg width="24" height="23" viewBox="0 0 24 23"><g filter="url(#bl)" fill="#b3b3b3"><path d="M0.7 6.5 C4 4 8 1.2 11.8 1.2 C15.6 1.2 19.6 4 23 6.5 Z" fill="#adadad"/><path d="M4 6.5 H19.7 V17 H4 Z M7.6 7.3 V16.3 H10 V7.3 Z M12.8 7.3 V16.3 H16 V7.3 Z" fill-rule="evenodd"/><path d="M4 17 L19.7 17 L23 21.8 L0.7 21.8 Z" fill="#b8b8b8"/></g></svg></div>
<div class="t" style="left:1449px;top:311.67px;font-size:20px;line-height:20px;color:#000;font-weight:normal;transform:scaleY(1.07);transform-origin:0 16.93px;">1020 Bank</div>
<div class="t" style="left:1866px;top:311.67px;font-size:20px;line-height:20px;color:#000;font-weight:normal;transform:scaleY(1.07);transform-origin:0 16.93px;letter-spacing:-0.8px">CHF</div>
<div class="t" style="right:364px;top:311.67px;font-size:20px;line-height:20px;color:#000;font-weight:normal;transform:scaleY(1.07);transform-origin:0 16.93px;">600.00</div>
<div class="t" style="right:183px;top:311.67px;font-size:20px;line-height:20px;color:#000;font-weight:normal;transform:scaleY(1.07);transform-origin:0 16.93px;">25 763.50</div>
<div class="a" style="left:22px;top:341px;width:2427px;height:40px;background:#ffffff"></div>
<div class="a" style="left:22px;top:380px;width:2427px;height:1px;background:#ededed"></div>
<div class="a" style="left:22px;top:341px;width:48px;height:39px;background:linear-gradient(#f4f4f4,#e9e9e9)"></div>
<div class="a" style="left:70px;top:341px;width:1px;height:40px;background:#d4d4d4"></div>
<div class="t" style="left:83px;top:351.17px;font-size:20px;line-height:20px;color:#000;font-weight:normal;transform:scaleY(1.07);transform-origin:0 16.93px;">19.07.2018</div>
<div class="t" style="left:233px;top:351.17px;font-size:20px;line-height:20px;color:#000;font-weight:normal;transform:scaleY(1.07);transform-origin:0 16.93px;">Zahlung</div>
<div class="t" style="left:689px;top:351.17px;font-size:20px;line-height:20px;color:#000;font-weight:normal;transform:scaleY(1.07);transform-origin:0 16.93px;letter-spacing:0.35px">Birgit Spring, Quartier Inf...</div>
<div class="a" style="left:967px;top:349px"><svg width="19" height="25" viewBox="0 0 19 25"><g filter="url(#bl)"><path d="M0.8 0.8 L2.7 3 L4.6 0.8 L6.6 3 L8.5 0.8 L10.5 3 L12.4 0.8 L14.4 3 L16.4 0.8 L16.4 23.8 L14.4 21.3 L12.4 23.8 L10.5 21.3 L8.5 23.8 L6.6 21.3 L4.6 23.8 L2.7 21.3 L0.8 23.8 Z" fill="#b4b4b4"/><rect x="0.8" y="6.7" width="15.6" height="2.2" fill="#d6d6d6"/></g></svg></div>
<div class="t" style="left:997px;top:351.17px;font-size:20px;line-height:20px;color:#000;font-weight:normal;transform:scaleY(1.07);transform-origin:0 16.93px;letter-spacing:-0.35px">RE-1807035</div>
<div class="a" style="left:36px;top:347px"><svg width="23" height="28" viewBox="0 0 23 28"><g filter="url(#bl)"><path d="M1.5 1.2 L4 3.2 L6.5 1.2 L9 3.2 L11.5 1.2 L14 3.2 L16.5 1.2 L19 3.2 L21 1.2 L21 26.5 L18.8 24.5 L16.3 26.5 L13.8 24.5 L11.3 26.5 L8.8 24.5 L6.3 26.5 L3.8 24.5 L1.5 26.5 Z" fill="#f2f2f2" stroke="#a0a0a0" stroke-width="1.6"/><rect x="5.2" y="8.2" width="12.5" height="1.8" fill="#9a9a9a"/><rect x="5.2" y="10" width="12.5" height="9" fill="none" stroke="#cfcfcf" stroke-width="0.9"/><line x1="11.4" y1="10" x2="11.4" y2="19" stroke="#cfcfcf" stroke-width="0.9"/><line x1="5.2" y1="14.5" x2="17.7" y2="14.5" stroke="#d8d8d8" stroke-width="0.9"/><rect x="10" y="19.6" width="7.7" height="1.8" fill="#9a9a9a"/></g></svg></div>
<div class="a" style="left:1144px;top:349px"><svg width="24" height="23" viewBox="0 0 24 23"><g filter="url(#bl)" fill="#b3b3b3"><path d="M0.7 6.5 C4 4 8 1.2 11.8 1.2 C15.6 1.2 19.6 4 23 6.5 Z" fill="#adadad"/><path d="M4 6.5 H19.7 V17 H4 Z M7.6 7.3 V16.3 H10 V7.3 Z M12.8 7.3 V16.3 H16 V7.3 Z" fill-rule="evenodd"/><path d="M4 17 L19.7 17 L23 21.8 L0.7 21.8 Z" fill="#b8b8b8"/></g></svg></div>
<div class="t" style="left:1178px;top:351.17px;font-size:20px;line-height:20px;color:#000;font-weight:normal;transform:scaleY(1.07);transform-origin:0 16.93px;">1020 Bank</div>
<div class="a" style="left:1415px;top:349px"><svg width="24" height="23" viewBox="0 0 24 23"><g filter="url(#bl)" fill="#b3b3b3"><path d="M0.7 6.5 C4 4 8 1.2 11.8 1.2 C15.6 1.2 19.6 4 23 6.5 Z" fill="#adadad"/><path d="M4 6.5 H19.7 V17 H4 Z M7.6 7.3 V16.3 H10 V7.3 Z M12.8 7.3 V16.3 H16 V7.3 Z" fill-rule="evenodd"/><path d="M4 17 L19.7 17 L23 21.8 L0.7 21.8 Z" fill="#b8b8b8"/></g></svg></div>
<div class="t" style="left:1449px;top:351.17px;font-size:20px;line-height:20px;color:#000;font-weight:normal;transform:scaleY(1.07);transform-origin:0 16.93px;">1100 Debitoren</div>
<div class="t" style="left:1866px;top:351.17px;font-size:20px;line-height:20px;color:#000;font-weight:normal;transform:scaleY(1.07);transform-origin:0 16.93px;letter-spacing:-0.8px">CHF</div>
<div class="t" style="right:364px;top:351.17px;font-size:20px;line-height:20px;color:#000;font-weight:normal;transform:scaleY(1.07);transform-origin:0 16.93px;">907.05</div>
<div class="t" style="right:183px;top:351.17px;font-size:20px;line-height:20px;color:#000;font-weight:normal;transform:scaleY(1.07);transform-origin:0 16.93px;">28 863.50</div>
<div class="a" style="left:22px;top:381px;width:2427px;height:39px;background:#f9f9f9"></div>
<div class="a" style="left:22px;top:419px;width:2427px;height:1px;background:#ededed"></div>
<div class="a" style="left:22px;top:381px;width:48px;height:38px;background:linear-gradient(#f4f4f4,#e9e9e9)"></div>
<div class="a" style="left:70px;top:381px;width:1px;height:39px;background:#d4d4d4"></div>
<div class="t" style="left:83px;top:390.67px;font-size:20px;line-height:20px;color:#000;font-weight:normal;transform:scaleY(1.07);transform-origin:0 16.93px;">30.06.2018</div>
<div class="t" style="left:233px;top:390.67px;font-size:20px;line-height:20px;color:#000;font-weight:normal;transform:scaleY(1.07);transform-origin:0 16.93px;">Miete Büroraum</div>
<div class="t" style="left:689px;top:390.67px;font-size:20px;line-height:20px;color:#000;font-weight:normal;transform:scaleY(1.07);transform-origin:0 16.93px;letter-spacing:0.2px">Kira Gruber, Immobilien ...</div>
<div class="t" style="left:963px;top:390.67px;font-size:20px;line-height:20px;color:#000;font-weight:normal;transform:scaleY(1.07);transform-origin:0 16.93px;">9</div>
<div class="a" style="left:1144px;top:389px"><svg width="24" height="23" viewBox="0 0 24 23"><g filter="url(#bl)" fill="#b3b3b3"><path d="M0.7 6.5 C4 4 8 1.2 11.8 1.2 C15.6 1.2 19.6 4 23 6.5 Z" fill="#adadad"/><path d="M4 6.5 H19.7 V17 H4 Z M7.6 7.3 V16.3 H10 V7.3 Z M12.8 7.3 V16.3 H16 V7.3 Z" fill-rule="evenodd"/><path d="M4 17 L19.7 17 L23 21.8 L0.7 21.8 Z" fill="#b8b8b8"/></g></svg></div>
<div class="t" style="left:1178px;top:390.67px;font-size:20px;line-height:20px;color:#000;font-weight:normal;transform:scaleY(1.07);transform-origin:0 16.93px;">6000 Raumaufwand</div>
<div class="a" style="left:1415px;top:389px"><svg width="24" height="23" viewBox="0 0 24 23"><g filter="url(#bl)" fill="#b3b3b3"><path d="M0.7 6.5 C4 4 8 1.2 11.8 1.2 C15.6 1.2 19.6 4 23 6.5 Z" fill="#adadad"/><path d="M4 6.5 H19.7 V17 H4 Z M7.6 7.3 V16.3 H10 V7.3 Z M12.8 7.3 V16.3 H16 V7.3 Z" fill-rule="evenodd"/><path d="M4 17 L19.7 17 L23 21.8 L0.7 21.8 Z" fill="#b8b8b8"/></g></svg></div>
<div class="t" style="left:1449px;top:390.67px;font-size:20px;line-height:20px;color:#000;font-weight:normal;transform:scaleY(1.07);transform-origin:0 16.93px;">1020 Bank</div>
<div class="t" style="left:1866px;top:390.67px;font-size:20px;line-height:20px;color:#000;font-weight:normal;transform:scaleY(1.07);transform-origin:0 16.93px;letter-spacing:-0.8px">CHF</div>
<div class="t" style="right:364px;top:390.67px;font-size:20px;line-height:20px;color:#000;font-weight:normal;transform:scaleY(1.07);transform-origin:0 16.93px;">550.00</div>
<div class="t" style="right:183px;top:390.67px;font-size:20px;line-height:20px;color:#000;font-weight:normal;transform:scaleY(1.07);transform-origin:0 16.93px;">27 956.45</div>
<div class="a" style="left:22px;top:420px;width:2427px;height:40px;background:#ffffff"></div>
<div class="a" style="left:22px;top:459px;width:2427px;height:1px;background:#ededed"></div>
<div class="a" style="left:22px;top:420px;width:48px;height:39px;background:linear-gradient(#f4f4f4,#e9e9e9)"></div>
<div class="a" style="left:70px;top:420px;width:1px;height:40px;background:#d4d4d4"></div>
<div class="t" style="left:83px;top:430.17px;font-size:20px;line-height:20px;color:#000;font-weight:normal;transform:scaleY(1.07);transform-origin:0 16.93px;">25.06.2018</div>
<div class="t" style="left:233px;top:430.17px;font-size:20px;line-height:20px;color:#000;font-weight:normal;transform:scaleY(1.07);transform-origin:0 16.93px;">Lohnzahlung</div>
<div class="t" style="left:689px;top:430.17px;font-size:20px;line-height:20px;color:#000;font-weight:normal;transform:scaleY(1.07);transform-origin:0 16.93px;">Maria Muster</div>
<div class="t" style="left:963px;top:430.17px;font-size:20px;line-height:20px;color:#000;font-weight:normal;transform:scaleY(1.07);transform-origin:0 16.93px;">19</div>
<div class="a" style="left:1144px;top:428px"><svg width="24" height="23" viewBox="0 0 24 23"><g filter="url(#bl)" fill="#b3b3b3"><path d="M0.7 6.5 C4 4 8 1.2 11.8 1.2 C15.6 1.2 19.6 4 23 6.5 Z" fill="#adadad"/><path d="M4 6.5 H19.7 V17 H4 Z M7.6 7.3 V16.3 H10 V7.3 Z M12.8 7.3 V16.3 H16 V7.3 Z" fill-rule="evenodd"/><path d="M4 17 L19.7 17 L23 21.8 L0.7 21.8 Z" fill="#b8b8b8"/></g></svg></div>
<div class="t" style="left:1178px;top:430.17px;font-size:20px;line-height:20px;color:#000;font-weight:normal;transform:scaleY(1.07);transform-origin:0 16.93px;">5000 Lohnaufwand</div>
<div class="a" style="left:1415px;top:428px"><svg width="24" height="23" viewBox="0 0 24 23"><g filter="url(#bl)" fill="#b3b3b3"><path d="M0.7 6.5 C4 4 8 1.2 11.8 1.2 C15.6 1.2 19.6 4 23 6.5 Z" fill="#adadad"/><path d="M4 6.5 H19.7 V17 H4 Z M7.6 7.3 V16.3 H10 V7.3 Z M12.8 7.3 V16.3 H16 V7.3 Z" fill-rule="evenodd"/><path d="M4 17 L19.7 17 L23 21.8 L0.7 21.8 Z" fill="#b8b8b8"/></g></svg></div>
<div class="t" style="left:1449px;top:430.17px;font-size:20px;line-height:20px;color:#000;font-weight:normal;transform:scaleY(1.07);transform-origin:0 16.93px;">1020 Bank</div>
<div class="t" style="left:1866px;top:430.17px;font-size:20px;line-height:20px;color:#000;font-weight:normal;transform:scaleY(1.07);transform-origin:0 16.93px;letter-spacing:-0.8px">CHF</div>
<div class="t" style="right:364px;top:430.17px;font-size:20px;line-height:20px;color:#000;font-weight:normal;transform:scaleY(1.07);transform-origin:0 16.93px;">2 500.00</div>
<div class="t" style="right:183px;top:430.17px;font-size:20px;line-height:20px;color:#000;font-weight:normal;transform:scaleY(1.07);transform-origin:0 16.93px;">28 506.45</div>
<div class="a" style="left:22px;top:460px;width:2427px;height:39px;background:#f9f9f9"></div>
<div class="a" style="left:22px;top:498px;width:2427px;height:1px;background:#ededed"></div>
<div class="a" style="left:22px;top:460px;width:48px;height:38px;background:linear-gradient(#f4f4f4,#e9e9e9)"></div>
<div class="a" style="left:70px;top:460px;width:1px;height:39px;background:#d4d4d4"></div>
<div class="t" style="left:83px;top:469.67px;font-size:20px;line-height:20px;color:#000;font-weight:normal;transform:scaleY(1.07);transform-origin:0 16.93px;">25.06.2018</div>
<div class="t" style="left:233px;top:469.67px;font-size:20px;line-height:20px;color:#000;font-weight:normal;transform:scaleY(1.07);transform-origin:0 16.93px;">Lohnzahlung</div>
<div class="t" style="left:689px;top:469.67px;font-size:20px;line-height:20px;color:#000;font-weight:normal;transform:scaleY(1.07);transform-origin:0 16.93px;">Peter Pauke</div>
<div class="t" style="left:963px;top:469.67px;font-size:20px;line-height:20px;color:#000;font-weight:normal;transform:scaleY(1.07);transform-origin:0 16.93px;">27</div>
<div class="a" style="left:1144px;top:468px"><svg width="24" height="23" viewBox="0 0 24 23"><g filter="url(#bl)" fill="#b3b3b3"><path d="M0.7 6.5 C4 4 8 1.2 11.8 1.2 C15.6 1.2 19.6 4 23 6.5 Z" fill="#adadad"/><path d="M4 6.5 H19.7 V17 H4 Z M7.6 7.3 V16.3 H10 V7.3 Z M12.8 7.3 V16.3 H16 V7.3 Z" fill-rule="evenodd"/><path d="M4 17 L19.7 17 L23 21.8 L0.7 21.8 Z" fill="#b8b8b8"/></g></svg></div>
<div class="t" style="left:1178px;top:469.67px;font-size:20px;line-height:20px;color:#000;font-weight:normal;transform:scaleY(1.07);transform-origin:0 16.93px;">5000 Lohnaufwand</div>
<div class="a" style="left:1415px;top:468px"><svg width="24" height="23" viewBox="0 0 24 23"><g filter="url(#bl)" fill="#b3b3b3"><path d="M0.7 6.5 C4 4 8 1.2 11.8 1.2 C15.6 1.2 19.6 4 23 6.5 Z" fill="#adadad"/><path d="M4 6.5 H19.7 V17 H4 Z M7.6 7.3 V16.3 H10 V7.3 Z M12.8 7.3 V16.3 H16 V7.3 Z" fill-rule="evenodd"/><path d="M4 17 L19.7 17 L23 21.8 L0.7 21.8 Z" fill="#b8b8b8"/></g></svg></div>
<div class="t" style="left:1449px;top:469.67px;font-size:20px;line-height:20px;color:#000;font-weight:normal;transform:scaleY(1.07);transform-origin:0 16.93px;">1020 Bank</div>
<div class="t" style="left:1866px;top:469.67px;font-size:20px;line-height:20px;color:#000;font-weight:normal;transform:scaleY(1.07);transform-origin:0 16.93px;letter-spacing:-0.8px">CHF</div>
<div class="t" style="right:364px;top:469.67px;font-size:20px;line-height:20px;color:#000;font-weight:normal;transform:scaleY(1.07);transform-origin:0 16.93px;">600.00</div>
<div class="t" style="right:183px;top:469.67px;font-size:20px;line-height:20px;color:#000;font-weight:normal;transform:scaleY(1.07);transform-origin:0 16.93px;">28 506.45</div>
<div class="a" style="left:22px;top:499px;width:2427px;height:40px;background:#ffffff"></div>
<div class="a" style="left:22px;top:538px;width:2427px;height:1px;background:#ededed"></div>
<div class="a" style="left:22px;top:499px;width:48px;height:39px;background:linear-gradient(#f4f4f4,#e9e9e9)"></div>
<div class="a" style="left:70px;top:499px;width:1px;height:40px;background:#d4d4d4"></div>
<div class="t" style="left:83px;top:509.17px;font-size:20px;line-height:20px;color:#000;font-weight:normal;transform:scaleY(1.07);transform-origin:0 16.93px;">15.06.2018</div>
<div class="t" style="left:233px;top:509.17px;font-size:20px;line-height:20px;color:#000;font-weight:normal;transform:scaleY(1.07);transform-origin:0 16.93px;">Zahlung</div>
<div class="t" style="left:689px;top:509.17px;font-size:20px;line-height:20px;color:#000;font-weight:normal;transform:scaleY(1.07);transform-origin:0 16.93px;letter-spacing:0.35px">Birgit Spring, Quartier Inf...</div>
<div class="a" style="left:967px;top:507px"><svg width="19" height="25" viewBox="0 0 19 25"><g filter="url(#bl)"><path d="M0.8 0.8 L2.7 3 L4.6 0.8 L6.6 3 L8.5 0.8 L10.5 3 L12.4 0.8 L14.4 3 L16.4 0.8 L16.4 23.8 L14.4 21.3 L12.4 23.8 L10.5 21.3 L8.5 23.8 L6.6 21.3 L4.6 23.8 L2.7 21.3 L0.8 23.8 Z" fill="#b4b4b4"/><rect x="0.8" y="6.7" width="15.6" height="2.2" fill="#d6d6d6"/></g></svg></div>
<div class="t" style="left:997px;top:509.17px;font-size:20px;line-height:20px;color:#000;font-weight:normal;transform:scaleY(1.07);transform-origin:0 16.93px;letter-spacing:-0.35px">RE-1807034</div>
<div class="a" style="left:36px;top:505px"><svg width="23" height="28" viewBox="0 0 23 28"><g filter="url(#bl)"><path d="M1.5 1.2 L4 3.2 L6.5 1.2 L9 3.2 L11.5 1.2 L14 3.2 L16.5 1.2 L19 3.2 L21 1.2 L21 26.5 L18.8 24.5 L16.3 26.5 L13.8 24.5 L11.3 26.5 L8.8 24.5 L6.3 26.5 L3.8 24.5 L1.5 26.5 Z" fill="#f2f2f2" stroke="#a0a0a0" stroke-width="1.6"/><rect x="5.2" y="8.2" width="12.5" height="1.8" fill="#9a9a9a"/><rect x="5.2" y="10" width="12.5" height="9" fill="none" stroke="#cfcfcf" stroke-width="0.9"/><line x1="11.4" y1="10" x2="11.4" y2="19" stroke="#cfcfcf" stroke-width="0.9"/><line x1="5.2" y1="14.5" x2="17.7" y2="14.5" stroke="#d8d8d8" stroke-width="0.9"/><rect x="10" y="19.6" width="7.7" height="1.8" fill="#9a9a9a"/></g></svg></div>
<div class="a" style="left:1144px;top:507px"><svg width="24" height="23" viewBox="0 0 24 23"><g filter="url(#bl)" fill="#b3b3b3"><path d="M0.7 6.5 C4 4 8 1.2 11.8 1.2 C15.6 1.2 19.6 4 23 6.5 Z" fill="#adadad"/><path d="M4 6.5 H19.7 V17 H4 Z M7.6 7.3 V16.3 H10 V7.3 Z M12.8 7.3 V16.3 H16 V7.3 Z" fill-rule="evenodd"/><path d="M4 17 L19.7 17 L23 21.8 L0.7 21.8 Z" fill="#b8b8b8"/></g></svg></div>
<div class="t" style="left:1178px;top:509.17px;font-size:20px;line-height:20px;color:#000;font-weight:normal;transform:scaleY(1.07);transform-origin:0 16.93px;">1020 Bank</div>
<div class="a" style="left:1415px;top:507px"><svg width="24" height="23" viewBox="0 0 24 23"><g filter="url(#bl)" fill="#b3b3b3"><path d="M0.7 6.5 C4 4 8 1.2 11.8 1.2 C15.6 1.2 19.6 4 23 6.5 Z" fill="#adadad"/><path d="M4 6.5 H19.7 V17 H4 Z M7.6 7.3 V16.3 H10 V7.3 Z M12.8 7.3 V16.3 H16 V7.3 Z" fill-rule="evenodd"/><path d="M4 17 L19.7 17 L23 21.8 L0.7 21.8 Z" fill="#b8b8b8"/></g></svg></div>
<div class="t" style="left:1449px;top:509.17px;font-size:20px;line-height:20px;color:#000;font-weight:normal;transform:scaleY(1.07);transform-origin:0 16.93px;">1100 Debitoren</div>
<div class="t" style="left:1866px;top:509.17px;font-size:20px;line-height:20px;color:#000;font-weight:normal;transform:scaleY(1.07);transform-origin:0 16.93px;letter-spacing:-0.8px">CHF</div>
<div class="t" style="right:364px;top:509.17px;font-size:20px;line-height:20px;color:#000;font-weight:normal;transform:scaleY(1.07);transform-origin:0 16.93px;">904.75</div>
<div class="t" style="right:183px;top:509.17px;font-size:20px;line-height:20px;color:#000;font-weight:normal;transform:scaleY(1.07);transform-origin:0 16.93px;">31 606.45</div>
<div class="a" style="left:22px;top:539px;width:2427px;height:39px;background:#f9f9f9"></div>
<div class="a" style="left:22px;top:577px;width:2427px;height:1px;background:#ededed"></div>
<div class="a" style="left:22px;top:539px;width:48px;height:38px;background:linear-gradient(#f4f4f4,#e9e9e9)"></div>
<div class="a" style="left:70px;top:539px;width:1px;height:39px;background:#d4d4d4"></div>
<div class="t" style="left:83px;top:548.67px;font-size:20px;line-height:20px;color:#000;font-weight:normal;transform:scaleY(1.07);transform-origin:0 16.93px;">31.05.2018</div>
<div class="t" style="left:233px;top:548.67px;font-size:20px;line-height:20px;color:#000;font-weight:normal;transform:scaleY(1.07);transform-origin:0 16.93px;">Miete Büroraum</div>
<div class="t" style="left:689px;top:548.67px;font-size:20px;line-height:20px;color:#000;font-weight:normal;transform:scaleY(1.07);transform-origin:0 16.93px;letter-spacing:0.2px">Kira Gruber, Immobilien ...</div>
<div class="t" style="left:963px;top:548.67px;font-size:20px;line-height:20px;color:#000;font-weight:normal;transform:scaleY(1.07);transform-origin:0 16.93px;">8</div>
<div class="a" style="left:1144px;top:547px"><svg width="24" height="23" viewBox="0 0 24 23"><g filter="url(#bl)" fill="#b3b3b3"><path d="M0.7 6.5 C4 4 8 1.2 11.8 1.2 C15.6 1.2 19.6 4 23 6.5 Z" fill="#adadad"/><path d="M4 6.5 H19.7 V17 H4 Z M7.6 7.3 V16.3 H10 V7.3 Z M12.8 7.3 V16.3 H16 V7.3 Z" fill-rule="evenodd"/><path d="M4 17 L19.7 17 L23 21.8 L0.7 21.8 Z" fill="#b8b8b8"/></g></svg></div>
<div class="t" style="left:1178px;top:548.67px;font-size:20px;line-height:20px;color:#000;font-weight:normal;transform:scaleY(1.07);transform-origin:0 16.93px;">6000 Raumaufwand</div>
<div class="a" style="left:1415px;top:547px"><svg width="24" height="23" viewBox="0 0 24 23"><g filter="url(#bl)" fill="#b3b3b3"><path d="M0.7 6.5 C4 4 8 1.2 11.8 1.2 C15.6 1.2 19.6 4 23 6.5 Z" fill="#adadad"/><path d="M4 6.5 H19.7 V17 H4 Z M7.6 7.3 V16.3 H10 V7.3 Z M12.8 7.3 V16.3 H16 V7.3 Z" fill-rule="evenodd"/><path d="M4 17 L19.7 17 L23 21.8 L0.7 21.8 Z" fill="#b8b8b8"/></g></svg></div>
<div class="t" style="left:1449px;top:548.67px;font-size:20px;line-height:20px;color:#000;font-weight:normal;transform:scaleY(1.07);transform-origin:0 16.93px;">1020 Bank</div>
<div class="t" style="left:1866px;top:548.67px;font-size:20px;line-height:20px;color:#000;font-weight:normal;transform:scaleY(1.07);transform-origin:0 16.93px;letter-spacing:-0.8px">CHF</div>
<div class="t" style="right:364px;top:548.67px;font-size:20px;line-height:20px;color:#000;font-weight:normal;transform:scaleY(1.07);transform-origin:0 16.93px;">550.00</div>
<div class="t" style="right:183px;top:548.67px;font-size:20px;line-height:20px;color:#000;font-weight:normal;transform:scaleY(1.07);transform-origin:0 16.93px;">30 701.70</div>
<div class="a" style="left:22px;top:578px;width:2427px;height:40px;background:#ffffff"></div>
<div class="a" style="left:22px;top:617px;width:2427px;height:1px;background:#ededed"></div>
<div class="a" style="left:22px;top:578px;width:48px;height:39px;background:linear-gradient(#f4f4f4,#e9e9e9)"></div>
<div class="a" style="left:70px;top:578px;width:1px;height:40px;background:#d4d4d4"></div>
<div class="t" style="left:83px;top:588.17px;font-size:20px;line-height:20px;color:#000;font-weight:normal;transform:scaleY(1.07);transform-origin:0 16.93px;">25.05.2018</div>
<div class="t" style="left:233px;top:588.17px;font-size:20px;line-height:20px;color:#000;font-weight:normal;transform:scaleY(1.07);transform-origin:0 16.93px;">Lohnzahlung</div>
<div class="t" style="left:689px;top:588.17px;font-size:20px;line-height:20px;color:#000;font-weight:normal;transform:scaleY(1.07);transform-origin:0 16.93px;">Maria Muster</div>
<div class="t" style="left:963px;top:588.17px;font-size:20px;line-height:20px;color:#000;font-weight:normal;transform:scaleY(1.07);transform-origin:0 16.93px;">18</div>
<div class="a" style="left:1144px;top:586px"><svg width="24" height="23" viewBox="0 0 24 23"><g filter="url(#bl)" fill="#b3b3b3"><path d="M0.7 6.5 C4 4 8 1.2 11.8 1.2 C15.6 1.2 19.6 4 23 6.5 Z" fill="#adadad"/><path d="M4 6.5 H19.7 V17 H4 Z M7.6 7.3 V16.3 H10 V7.3 Z M12.8 7.3 V16.3 H16 V7.3 Z" fill-rule="evenodd"/><path d="M4 17 L19.7 17 L23 21.8 L0.7 21.8 Z" fill="#b8b8b8"/></g></svg></div>
<div class="t" style="left:1178px;top:588.17px;font-size:20px;line-height:20px;color:#000;font-weight:normal;transform:scaleY(1.07);transform-origin:0 16.93px;">5000 Lohnaufwand</div>
<div class="a" style="left:1415px;top:586px"><svg width="24" height="23" viewBox="0 0 24 23"><g filter="url(#bl)" fill="#b3b3b3"><path d="M0.7 6.5 C4 4 8 1.2 11.8 1.2 C15.6 1.2 19.6 4 23 6.5 Z" fill="#adadad"/><path d="M4 6.5 H19.7 V17 H4 Z M7.6 7.3 V16.3 H10 V7.3 Z M12.8 7.3 V16.3 H16 V7.3 Z" fill-rule="evenodd"/><path d="M4 17 L19.7 17 L23 21.8 L0.7 21.8 Z" fill="#b8b8b8"/></g></svg></div>
<div class="t" style="left:1449px;top:588.17px;font-size:20px;line-height:20px;color:#000;font-weight:normal;transform:scaleY(1.07);transform-origin:0 16.93px;">1020 Bank</div>
<div class="t" style="left:1866px;top:588.17px;font-size:20px;line-height:20px;color:#000;font-weight:normal;transform:scaleY(1.07);transform-origin:0 16.93px;letter-spacing:-0.8px">CHF</div>
<div class="t" style="right:364px;top:588.17px;font-size:20px;line-height:20px;color:#000;font-weight:normal;transform:scaleY(1.07);transform-origin:0 16.93px;">2 500.00</div>
<div class="t" style="right:183px;top:588.17px;font-size:20px;line-height:20px;color:#000;font-weight:normal;transform:scaleY(1.07);transform-origin:0 16.93px;">31 251.70</div>
<div class="a" style="left:22px;top:618px;width:2427px;height:39px;background:#f9f9f9"></div>
<div class="a" style="left:22px;top:656px;width:2427px;height:1px;background:#ededed"></div>
<div class="a" style="left:22px;top:618px;width:48px;height:38px;background:linear-gradient(#f4f4f4,#e9e9e9)"></div>
<div class="a" style="left:70px;top:618px;width:1px;height:39px;background:#d4d4d4"></div>
<div class="t" style="left:83px;top:627.67px;font-size:20px;line-height:20px;color:#000;font-weight:normal;transform:scaleY(1.07);transform-origin:0 16.93px;">25.05.2018</div>
<div class="t" style="left:233px;top:627.67px;font-size:20px;line-height:20px;color:#000;font-weight:normal;transform:scaleY(1.07);transform-origin:0 16.93px;">Lohnzahlung</div>
<div class="t" style="left:689px;top:627.67px;font-size:20px;line-height:20px;color:#000;font-weight:normal;transform:scaleY(1.07);transform-origin:0 16.93px;">Peter Pauke</div>
<div class="t" style="left:963px;top:627.67px;font-size:20px;line-height:20px;color:#000;font-weight:normal;transform:scaleY(1.07);transform-origin:0 16.93px;">26</div>
<div class="a" style="left:1144px;top:626px"><svg width="24" height="23" viewBox="0 0 24 23"><g filter="url(#bl)" fill="#b3b3b3"><path d="M0.7 6.5 C4 4 8 1.2 11.8 1.2 C15.6 1.2 19.6 4 23 6.5 Z" fill="#adadad"/><path d="M4 6.5 H19.7 V17 H4 Z M7.6 7.3 V16.3 H10 V7.3 Z M12.8 7.3 V16.3 H16 V7.3 Z" fill-rule="evenodd"/><path d="M4 17 L19.7 17 L23 21.8 L0.7 21.8 Z" fill="#b8b8b8"/></g></svg></div>
<div class="t" style="left:1178px;top:627.67px;font-size:20px;line-height:20px;color:#000;font-weight:normal;transform:scaleY(1.07);transform-origin:0 16.93px;">5000 Lohnaufwand</div>
<div class="a" style="left:1415px;top:626px"><svg width="24" height="23" viewBox="0 0 24 23"><g filter="url(#bl)" fill="#b3b3b3"><path d="M0.7 6.5 C4 4 8 1.2 11.8 1.2 C15.6 1.2 19.6 4 23 6.5 Z" fill="#adadad"/><path d="M4 6.5 H19.7 V17 H4 Z M7.6 7.3 V16.3 H10 V7.3 Z M12.8 7.3 V16.3 H16 V7.3 Z" fill-rule="evenodd"/><path d="M4 17 L19.7 17 L23 21.8 L0.7 21.8 Z" fill="#b8b8b8"/></g></svg></div>
<div class="t" style="left:1449px;top:627.67px;font-size:20px;line-height:20px;color:#000;font-weight:normal;transform:scaleY(1.07);transform-origin:0 16.93px;">1020 Bank</div>
<div class="t" style="left:1866px;top:627.67px;font-size:20px;line-height:20px;color:#000;font-weight:normal;transform:scaleY(1.07);transform-origin:0 16.93px;letter-spacing:-0.8px">CHF</div>
<div class="t" style="right:364px;top:627.67px;font-size:20px;line-height:20px;color:#000;font-weight:normal;transform:scaleY(1.07);transform-origin:0 16.93px;">600.00</div>
<div class="t" style="right:183px;top:627.67px;font-size:20px;line-height:20px;color:#000;font-weight:normal;transform:scaleY(1.07);transform-origin:0 16.93px;">31 251.70</div>
<div class="a" style="left:22px;top:657px;width:2427px;height:40px;background:#ffffff"></div>
<div class="a" style="left:22px;top:696px;width:2427px;height:1px;background:#ededed"></div>
<div class="a" style="left:22px;top:657px;width:48px;height:39px;background:linear-gradient(#f4f4f4,#e9e9e9)"></div>
<div class="a" style="left:70px;top:657px;width:1px;height:40px;background:#d4d4d4"></div>
<div class="t" style="left:83px;top:667.17px;font-size:20px;line-height:20px;color:#000;font-weight:normal;transform:scaleY(1.07);transform-origin:0 16.93px;">15.05.2018</div>
<div class="t" style="left:233px;top:667.17px;font-size:20px;line-height:20px;color:#000;font-weight:normal;transform:scaleY(1.07);transform-origin:0 16.93px;">Zahlung</div>
<div class="t" style="left:689px;top:667.17px;font-size:20px;line-height:20px;color:#000;font-weight:normal;transform:scaleY(1.07);transform-origin:0 16.93px;letter-spacing:0.35px">Birgit Spring, Quartier Inf...</div>
<div class="a" style="left:967px;top:665px"><svg width="19" height="25" viewBox="0 0 19 25"><g filter="url(#bl)"><path d="M0.8 0.8 L2.7 3 L4.6 0.8 L6.6 3 L8.5 0.8 L10.5 3 L12.4 0.8 L14.4 3 L16.4 0.8 L16.4 23.8 L14.4 21.3 L12.4 23.8 L10.5 21.3 L8.5 23.8 L6.6 21.3 L4.6 23.8 L2.7 21.3 L0.8 23.8 Z" fill="#b4b4b4"/><rect x="0.8" y="6.7" width="15.6" height="2.2" fill="#d6d6d6"/></g></svg></div>
<div class="t" style="left:997px;top:667.17px;font-size:20px;line-height:20px;color:#000;font-weight:normal;transform:scaleY(1.07);transform-origin:0 16.93px;letter-spacing:-0.35px">RE-1807033</div>
<div class="a" style="left:36px;top:663px"><svg width="23" height="28" viewBox="0 0 23 28"><g filter="url(#bl)"><path d="M1.5 1.2 L4 3.2 L6.5 1.2 L9 3.2 L11.5 1.2 L14 3.2 L16.5 1.2 L19 3.2 L21 1.2 L21 26.5 L18.8 24.5 L16.3 26.5 L13.8 24.5 L11.3 26.5 L8.8 24.5 L6.3 26.5 L3.8 24.5 L1.5 26.5 Z" fill="#f2f2f2" stroke="#a0a0a0" stroke-width="1.6"/><rect x="5.2" y="8.2" width="12.5" height="1.8" fill="#9a9a9a"/><rect x="5.2" y="10" width="12.5" height="9" fill="none" stroke="#cfcfcf" stroke-width="0.9"/><line x1="11.4" y1="10" x2="11.4" y2="19" stroke="#cfcfcf" stroke-width="0.9"/><line x1="5.2" y1="14.5" x2="17.7" y2="14.5" stroke="#d8d8d8" stroke-width="0.9"/><rect x="10" y="19.6" width="7.7" height="1.8" fill="#9a9a9a"/></g></svg></div>
<div class="a" style="left:1144px;top:665px"><svg width="24" height="23" viewBox="0 0 24 23"><g filter="url(#bl)" fill="#b3b3b3"><path d="M0.7 6.5 C4 4 8 1.2 11.8 1.2 C15.6 1.2 19.6 4 23 6.5 Z" fill="#adadad"/><path d="M4 6.5 H19.7 V17 H4 Z M7.6 7.3 V16.3 H10 V7.3 Z M12.8 7.3 V16.3 H16 V7.3 Z" fill-rule="evenodd"/><path d="M4 17 L19.7 17 L23 21.8 L0.7 21.8 Z" fill="#b8b8b8"/></g></svg></div>
<div class="t" style="left:1178px;top:667.17px;font-size:20px;line-height:20px;color:#000;font-weight:normal;transform:scaleY(1.07);transform-origin:0 16.93px;">1020 Bank</div>
<div class="a" style="left:1415px;top:665px"><svg width="24" height="23" viewBox="0 0 24 23"><g filter="url(#bl)" fill="#b3b3b3"><path d="M0.7 6.5 C4 4 8 1.2 11.8 1.2 C15.6 1.2 19.6 4 23 6.5 Z" fill="#adadad"/><path d="M4 6.5 H19.7 V17 H4 Z M7.6 7.3 V16.3 H10 V7.3 Z M12.8 7.3 V16.3 H16 V7.3 Z" fill-rule="evenodd"/><path d="M4 17 L19.7 17 L23 21.8 L0.7 21.8 Z" fill="#b8b8b8"/></g></svg></div>
<div class="t" style="left:1449px;top:667.17px;font-size:20px;line-height:20px;color:#000;font-weight:normal;transform:scaleY(1.07);transform-origin:0 16.93px;">1100 Debitoren</div>
<div class="t" style="left:1866px;top:667.17px;font-size:20px;line-height:20px;color:#000;font-weight:normal;transform:scaleY(1.07);transform-origin:0 16.93px;letter-spacing:-0.8px">CHF</div>
<div class="t" style="right:364px;top:667.17px;font-size:20px;line-height:20px;color:#000;font-weight:normal;transform:scaleY(1.07);transform-origin:0 16.93px;">904.50</div>
<div class="t" style="right:183px;top:667.17px;font-size:20px;line-height:20px;color:#000;font-weight:normal;transform:scaleY(1.07);transform-origin:0 16.93px;">34 351.70</div>
<div class="a" style="left:22px;top:697px;width:2427px;height:39px;background:#f9f9f9"></div>
<div class="a" style="left:22px;top:735px;width:2427px;height:1px;background:#ededed"></div>
<div class="a" style="left:22px;top:697px;width:48px;height:38px;background:linear-gradient(#f4f4f4,#e9e9e9)"></div>
<div class="a" style="left:70px;top:697px;width:1px;height:39px;background:#d4d4d4"></div>
<div class="t" style="left:83px;top:706.67px;font-size:20px;line-height:20px;color:#000;font-weight:normal;transform:scaleY(1.07);transform-origin:0 16.93px;">30.04.2018</div>
<div class="t" style="left:233px;top:706.67px;font-size:20px;line-height:20px;color:#000;font-weight:normal;transform:scaleY(1.07);transform-origin:0 16.93px;">Miete Büroraum</div>
<div class="t" style="left:689px;top:706.67px;font-size:20px;line-height:20px;color:#000;font-weight:normal;transform:scaleY(1.07);transform-origin:0 16.93px;letter-spacing:0.2px">Kira Gruber, Immobilien ...</div>
<div class="t" style="left:963px;top:706.67px;font-size:20px;line-height:20px;color:#000;font-weight:normal;transform:scaleY(1.07);transform-origin:0 16.93px;">7</div>
<div class="a" style="left:1144px;top:705px"><svg width="24" height="23" viewBox="0 0 24 23"><g filter="url(#bl)" fill="#b3b3b3"><path d="M0.7 6.5 C4 4 8 1.2 11.8 1.2 C15.6 1.2 19.6 4 23 6.5 Z" fill="#adadad"/><path d="M4 6.5 H19.7 V17 H4 Z M7.6 7.3 V16.3 H10 V7.3 Z M12.8 7.3 V16.3 H16 V7.3 Z" fill-rule="evenodd"/><path d="M4 17 L19.7 17 L23 21.8 L0.7 21.8 Z" fill="#b8b8b8"/></g></svg></div>
<div class="t" style="left:1178px;top:706.67px;font-size:20px;line-height:20px;color:#000;font-weight:normal;transform:scaleY(1.07);transform-origin:0 16.93px;">6000 Raumaufwand</div>
<div class="a" style="left:1415px;top:705px"><svg width="24" height="23" viewBox="0 0 24 23"><g filter="url(#bl)" fill="#b3b3b3"><path d="M0.7 6.5 C4 4 8 1.2 11.8 1.2 C15.6 1.2 19.6 4 23 6.5 Z" fill="#adadad"/><path d="M4 6.5 H19.7 V17 H4 Z M7.6 7.3 V16.3 H10 V7.3 Z M12.8 7.3 V16.3 H16 V7.3 Z" fill-rule="evenodd"/><path d="M4 17 L19.7 17 L23 21.8 L0.7 21.8 Z" fill="#b8b8b8"/></g></svg></div>
<div class="t" style="left:1449px;top:706.67px;font-size:20px;line-height:20px;color:#000;font-weight:normal;transform:scaleY(1.07);transform-origin:0 16.93px;">1020 Bank</div>
<div class="t" style="left:1866px;top:706.67px;font-size:20px;line-height:20px;color:#000;font-weight:normal;transform:scaleY(1.07);transform-origin:0 16.93px;letter-spacing:-0.8px">CHF</div>
<div class="t" style="right:364px;top:706.67px;font-size:20px;line-height:20px;color:#000;font-weight:normal;transform:scaleY(1.07);transform-origin:0 16.93px;">550.00</div>
<div class="t" style="right:183px;top:706.67px;font-size:20px;line-height:20px;color:#000;font-weight:normal;transform:scaleY(1.07);transform-origin:0 16.93px;">33 447.20</div>
<div class="a" style="left:22px;top:736px;width:2427px;height:40px;background:#ffffff"></div>
<div class="a" style="left:22px;top:775px;width:2427px;height:1px;background:#ededed"></div>
<div class="a" style="left:22px;top:736px;width:48px;height:39px;background:linear-gradient(#f4f4f4,#e9e9e9)"></div>
<div class="a" style="left:70px;top:736px;width:1px;height:40px;background:#d4d4d4"></div>
<div class="t" style="left:83px;top:746.17px;font-size:20px;line-height:20px;color:#000;font-weight:normal;transform:scaleY(1.07);transform-origin:0 16.93px;">25.04.2018</div>
<div class="t" style="left:233px;top:746.17px;font-size:20px;line-height:20px;color:#000;font-weight:normal;transform:scaleY(1.07);transform-origin:0 16.93px;">Lohnzahlung</div>
<div class="t" style="left:689px;top:746.17px;font-size:20px;line-height:20px;color:#000;font-weight:normal;transform:scaleY(1.07);transform-origin:0 16.93px;">Maria Muster</div>
<div class="t" style="left:963px;top:746.17px;font-size:20px;line-height:20px;color:#000;font-weight:normal;transform:scaleY(1.07);transform-origin:0 16.93px;">17</div>
<div class="a" style="left:1144px;top:744px"><svg width="24" height="23" viewBox="0 0 24 23"><g filter="url(#bl)" fill="#b3b3b3"><path d="M0.7 6.5 C4 4 8 1.2 11.8 1.2 C15.6 1.2 19.6 4 23 6.5 Z" fill="#adadad"/><path d="M4 6.5 H19.7 V17 H4 Z M7.6 7.3 V16.3 H10 V7.3 Z M12.8 7.3 V16.3 H16 V7.3 Z" fill-rule="evenodd"/><path d="M4 17 L19.7 17 L23 21.8 L0.7 21.8 Z" fill="#b8b8b8"/></g></svg></div>
<div class="t" style="left:1178px;top:746.17px;font-size:20px;line-height:20px;color:#000;font-weight:normal;transform:scaleY(1.07);transform-origin:0 16.93px;">5000 Lohnaufwand</div>
<div class="a" style="left:1415px;top:744px"><svg width="24" height="23" viewBox="0 0 24 23"><g filter="url(#bl)" fill="#b3b3b3"><path d="M0.7 6.5 C4 4 8 1.2 11.8 1.2 C15.6 1.2 19.6 4 23 6.5 Z" fill="#adadad"/><path d="M4 6.5 H19.7 V17 H4 Z M7.6 7.3 V16.3 H10 V7.3 Z M12.8 7.3 V16.3 H16 V7.3 Z" fill-rule="evenodd"/><path d="M4 17 L19.7 17 L23 21.8 L0.7 21.8 Z" fill="#b8b8b8"/></g></svg></div>
<div class="t" style="left:1449px;top:746.17px;font-size:20px;line-height:20px;color:#000;font-weight:normal;transform:scaleY(1.07);transform-origin:0 16.93px;">1020 Bank</div>
<div class="t" style="left:1866px;top:746.17px;font-size:20px;line-height:20px;color:#000;font-weight:normal;transform:scaleY(1.07);transform-origin:0 16.93px;letter-spacing:-0.8px">CHF</div>
<div class="t" style="right:364px;top:746.17px;font-size:20px;line-height:20px;color:#000;font-weight:normal;transform:scaleY(1.07);transform-origin:0 16.93px;">2 500.00</div>
<div class="t" style="right:183px;top:746.17px;font-size:20px;line-height:20px;color:#000;font-weight:normal;transform:scaleY(1.07);transform-origin:0 16.93px;">33 997.20</div>
<div class="a" style="left:22px;top:776px;width:2427px;height:39px;background:#f9f9f9"></div>
<div class="a" style="left:22px;top:814px;width:2427px;height:1px;background:#ededed"></div>
<div class="a" style="left:22px;top:776px;width:48px;height:38px;background:linear-gradient(#f4f4f4,#e9e9e9)"></div>
<div class="a" style="left:70px;top:776px;width:1px;height:39px;background:#d4d4d4"></div>
<div class="t" style="left:83px;top:785.67px;font-size:20px;line-height:20px;color:#000;font-weight:normal;transform:scaleY(1.07);transform-origin:0 16.93px;">25.04.2018</div>
<div class="t" style="left:233px;top:785.67px;font-size:20px;line-height:20px;color:#000;font-weight:normal;transform:scaleY(1.07);transform-origin:0 16.93px;">Lohnzahlung</div>
<div class="t" style="left:689px;top:785.67px;font-size:20px;line-height:20px;color:#000;font-weight:normal;transform:scaleY(1.07);transform-origin:0 16.93px;">Peter Pauke</div>
<div class="t" style="left:963px;top:785.67px;font-size:20px;line-height:20px;color:#000;font-weight:normal;transform:scaleY(1.07);transform-origin:0 16.93px;">25</div>
<div class="a" style="left:1144px;top:784px"><svg width="24" height="23" viewBox="0 0 24 23"><g filter="url(#bl)" fill="#b3b3b3"><path d="M0.7 6.5 C4 4 8 1.2 11.8 1.2 C15.6 1.2 19.6 4 23 6.5 Z" fill="#adadad"/><path d="M4 6.5 H19.7 V17 H4 Z M7.6 7.3 V16.3 H10 V7.3 Z M12.8 7.3 V16.3 H16 V7.3 Z" fill-rule="evenodd"/><path d="M4 17 L19.7 17 L23 21.8 L0.7 21.8 Z" fill="#b8b8b8"/></g></svg></div>
<div class="t" style="left:1178px;top:785.67px;font-size:20px;line-height:20px;color:#000;font-weight:normal;transform:scaleY(1.07);transform-origin:0 16.93px;">5000 Lohnaufwand</div>
<div class="a" style="left:1415px;top:784px"><svg width="24" height="23" viewBox="0 0 24 23"><g filter="url(#bl)" fill="#b3b3b3"><path d="M0.7 6.5 C4 4 8 1.2 11.8 1.2 C15.6 1.2 19.6 4 23 6.5 Z" fill="#adadad"/><path d="M4 6.5 H19.7 V17 H4 Z M7.6 7.3 V16.3 H10 V7.3 Z M12.8 7.3 V16.3 H16 V7.3 Z" fill-rule="evenodd"/><path d="M4 17 L19.7 17 L23 21.8 L0.7 21.8 Z" fill="#b8b8b8"/></g></svg></div>
<div class="t" style="left:1449px;top:785.67px;font-size:20px;line-height:20px;color:#000;font-weight:normal;transform:scaleY(1.07);transform-origin:0 16.93px;">1020 Bank</div>
<div class="t" style="left:1866px;top:785.67px;font-size:20px;line-height:20px;color:#000;font-weight:normal;transform:scaleY(1.07);transform-origin:0 16.93px;letter-spacing:-0.8px">CHF</div>
<div class="t" style="right:364px;top:785.67px;font-size:20px;line-height:20px;color:#000;font-weight:normal;transform:scaleY(1.07);transform-origin:0 16.93px;">600.00</div>
<div class="t" style="right:183px;top:785.67px;font-size:20px;line-height:20px;color:#000;font-weight:normal;transform:scaleY(1.07);transform-origin:0 16.93px;">33 997.20</div>
<div class="a" style="left:22px;top:815px;width:2427px;height:40px;background:#ffffff"></div>
<div class="a" style="left:22px;top:854px;width:2427px;height:1px;background:#ededed"></div>
<div class="a" style="left:22px;top:815px;width:48px;height:39px;background:linear-gradient(#f4f4f4,#e9e9e9)"></div>
<div class="a" style="left:70px;top:815px;width:1px;height:40px;background:#d4d4d4"></div>
<div class="t" style="left:83px;top:825.17px;font-size:20px;line-height:20px;color:#000;font-weight:normal;transform:scaleY(1.07);transform-origin:0 16.93px;">31.03.2018</div>
<div class="t" style="left:233px;top:825.17px;font-size:20px;line-height:20px;color:#000;font-weight:normal;transform:scaleY(1.07);transform-origin:0 16.93px;">Miete Büroraum</div>
<div class="t" style="left:689px;top:825.17px;font-size:20px;line-height:20px;color:#000;font-weight:normal;transform:scaleY(1.07);transform-origin:0 16.93px;letter-spacing:0.2px">Kira Gruber, Immobilien ...</div>
<div class="t" style="left:963px;top:825.17px;font-size:20px;line-height:20px;color:#000;font-weight:normal;transform:scaleY(1.07);transform-origin:0 16.93px;">6</div>
<div class="a" style="left:1144px;top:823px"><svg width="24" height="23" viewBox="0 0 24 23"><g filter="url(#bl)" fill="#b3b3b3"><path d="M0.7 6.5 C4 4 8 1.2 11.8 1.2 C15.6 1.2 19.6 4 23 6.5 Z" fill="#adadad"/><path d="M4 6.5 H19.7 V17 H4 Z M7.6 7.3 V16.3 H10 V7.3 Z M12.8 7.3 V16.3 H16 V7.3 Z" fill-rule="evenodd"/><path d="M4 17 L19.7 17 L23 21.8 L0.7 21.8 Z" fill="#b8b8b8"/></g></svg></div>
<div class="t" style="left:1178px;top:825.17px;font-size:20px;line-height:20px;color:#000;font-weight:normal;transform:scaleY(1.07);transform-origin:0 16.93px;">6000 Raumaufwand</div>
<div class="a" style="left:1415px;top:823px"><svg width="24" height="23" viewBox="0 0 24 23"><g filter="url(#bl)" fill="#b3b3b3"><path d="M0.7 6.5 C4 4 8 1.2 11.8 1.2 C15.6 1.2 19.6 4 23 6.5 Z" fill="#adadad"/><path d="M4 6.5 H19.7 V17 H4 Z M7.6 7.3 V16.3 H10 V7.3 Z M12.8 7.3 V16.3 H16 V7.3 Z" fill-rule="evenodd"/><path d="M4 17 L19.7 17 L23 21.8 L0.7 21.8 Z" fill="#b8b8b8"/></g></svg></div>
<div class="t" style="left:1449px;top:825.17px;font-size:20px;line-height:20px;color:#000;font-weight:normal;transform:scaleY(1.07);transform-origin:0 16.93px;">1020 Bank</div>
<div class="t" style="left:1866px;top:825.17px;font-size:20px;line-height:20px;color:#000;font-weight:normal;transform:scaleY(1.07);transform-origin:0 16.93px;letter-spacing:-0.8px">CHF</div>
<div class="t" style="right:364px;top:825.17px;font-size:20px;line-height:20px;color:#000;font-weight:normal;transform:scaleY(1.07);transform-origin:0 16.93px;">550.00</div>
<div class="t" style="right:183px;top:825.17px;font-size:20px;line-height:20px;color:#000;font-weight:normal;transform:scaleY(1.07);transform-origin:0 16.93px;">37 097.20</div>
<div class="a" style="left:22px;top:855px;width:2427px;height:39px;background:#f9f9f9"></div>
<div class="a" style="left:22px;top:893px;width:2427px;height:1px;background:#ededed"></div>
<div class="a" style="left:22px;top:855px;width:48px;height:38px;background:linear-gradient(#f4f4f4,#e9e9e9)"></div>
<div class="a" style="left:70px;top:855px;width:1px;height:39px;background:#d4d4d4"></div>
<div class="t" style="left:83px;top:864.67px;font-size:20px;line-height:20px;color:#000;font-weight:normal;transform:scaleY(1.07);transform-origin:0 16.93px;">25.03.2018</div>
<div class="t" style="left:233px;top:864.67px;font-size:20px;line-height:20px;color:#000;font-weight:normal;transform:scaleY(1.07);transform-origin:0 16.93px;">Lohnzahlung</div>
<div class="t" style="left:689px;top:864.67px;font-size:20px;line-height:20px;color:#000;font-weight:normal;transform:scaleY(1.07);transform-origin:0 16.93px;">Maria Muster</div>
<div class="t" style="left:963px;top:864.67px;font-size:20px;line-height:20px;color:#000;font-weight:normal;transform:scaleY(1.07);transform-origin:0 16.93px;">16</div>
<div class="a" style="left:1144px;top:863px"><svg width="24" height="23" viewBox="0 0 24 23"><g filter="url(#bl)" fill="#b3b3b3"><path d="M0.7 6.5 C4 4 8 1.2 11.8 1.2 C15.6 1.2 19.6 4 23 6.5 Z" fill="#adadad"/><path d="M4 6.5 H19.7 V17 H4 Z M7.6 7.3 V16.3 H10 V7.3 Z M12.8 7.3 V16.3 H16 V7.3 Z" fill-rule="evenodd"/><path d="M4 17 L19.7 17 L23 21.8 L0.7 21.8 Z" fill="#b8b8b8"/></g></svg></div>
<div class="t" style="left:1178px;top:864.67px;font-size:20px;line-height:20px;color:#000;font-weight:normal;transform:scaleY(1.07);transform-origin:0 16.93px;">5000 Lohnaufwand</div>
<div class="a" style="left:1415px;top:863px"><svg width="24" height="23" viewBox="0 0 24 23"><g filter="url(#bl)" fill="#b3b3b3"><path d="M0.7 6.5 C4 4 8 1.2 11.8 1.2 C15.6 1.2 19.6 4 23 6.5 Z" fill="#adadad"/><path d="M4 6.5 H19.7 V17 H4 Z M7.6 7.3 V16.3 H10 V7.3 Z M12.8 7.3 V16.3 H16 V7.3 Z" fill-rule="evenodd"/><path d="M4 17 L19.7 17 L23 21.8 L0.7 21.8 Z" fill="#b8b8b8"/></g></svg></div>
<div class="t" style="left:1449px;top:864.67px;font-size:20px;line-height:20px;color:#000;font-weight:normal;transform:scaleY(1.07);transform-origin:0 16.93px;">1020 Bank</div>
<div class="t" style="left:1866px;top:864.67px;font-size:20px;line-height:20px;color:#000;font-weight:normal;transform:scaleY(1.07);transform-origin:0 16.93px;letter-spacing:-0.8px">CHF</div>
<div class="t" style="right:364px;top:864.67px;font-size:20px;line-height:20px;color:#000;font-weight:normal;transform:scaleY(1.07);transform-origin:0 16.93px;">2 500.00</div>
<div class="t" style="right:183px;top:864.67px;font-size:20px;line-height:20px;color:#000;font-weight:normal;transform:scaleY(1.07);transform-origin:0 16.93px;">37 647.20</div>
</div>
</body></html>
